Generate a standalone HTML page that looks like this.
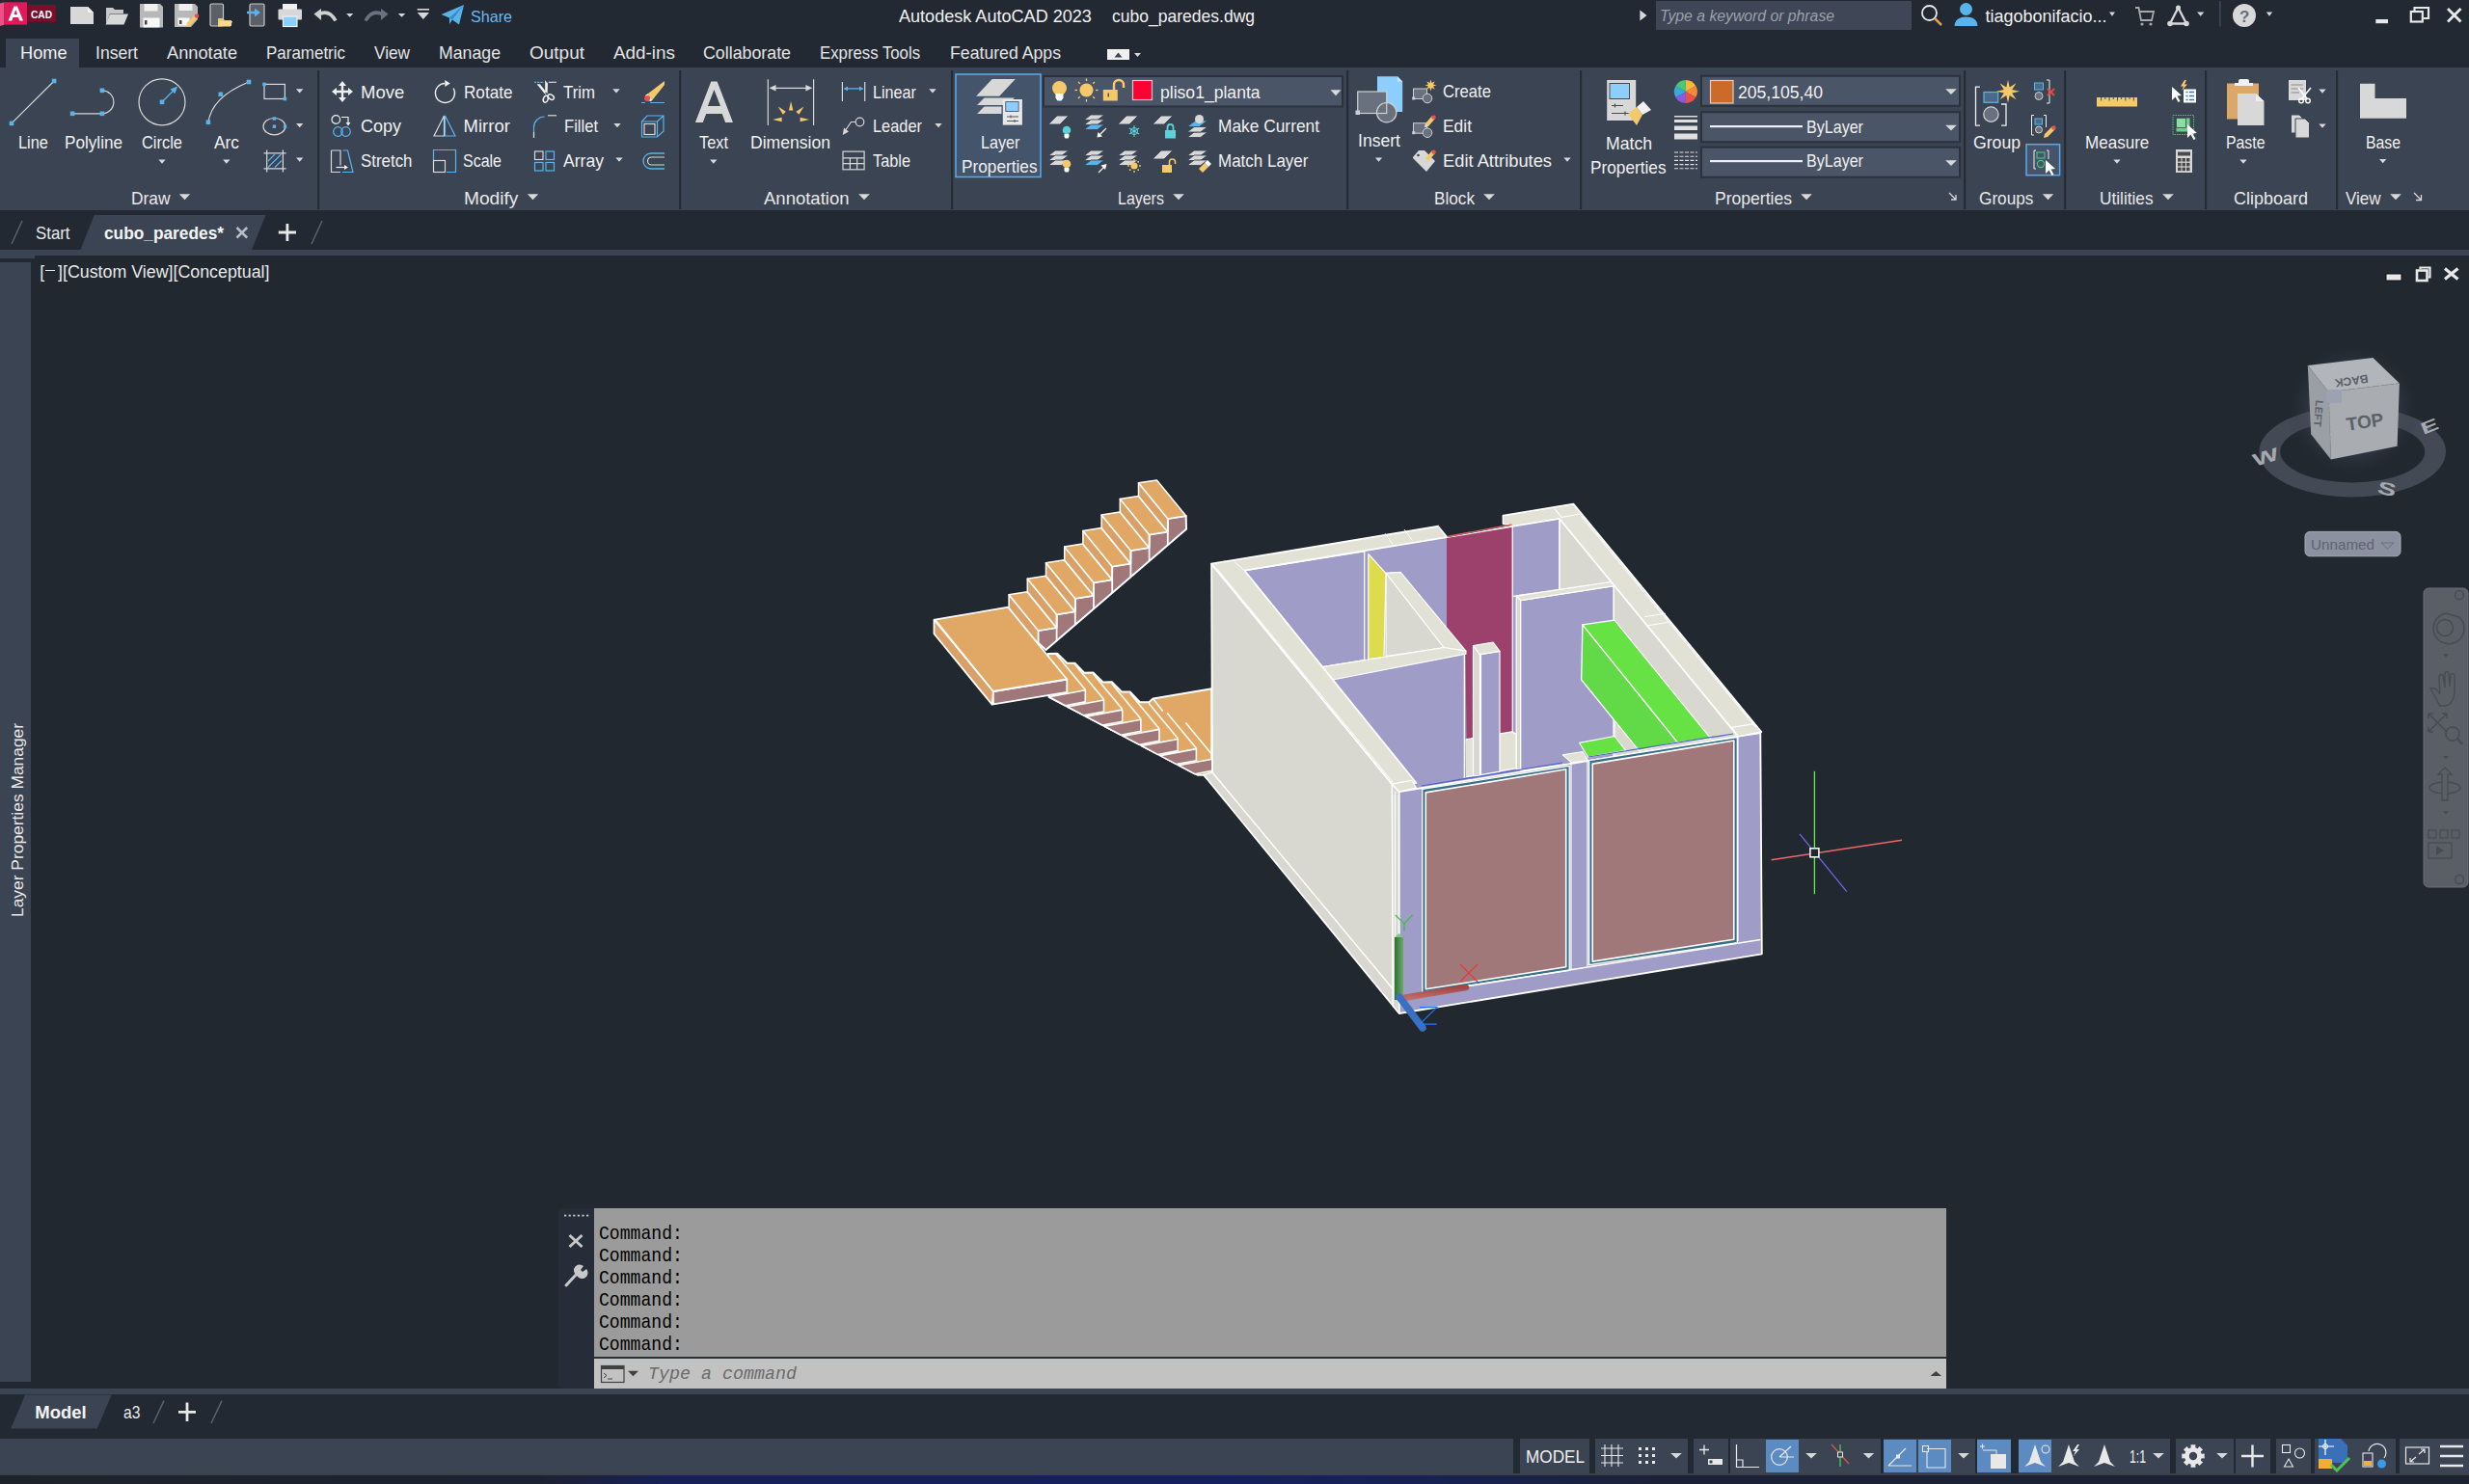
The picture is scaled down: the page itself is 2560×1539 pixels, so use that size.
<!DOCTYPE html>
<html><head><meta charset="utf-8">
<style>
*{margin:0;padding:0;box-sizing:border-box}
html,body{width:2560px;height:1539px;overflow:hidden;background:#222933;font-family:"Liberation Sans",sans-serif;color:#f0f0f0;position:relative}
.a{position:absolute}
.t{position:absolute;white-space:nowrap;line-height:1}
svg{position:absolute;overflow:visible}
</style></head><body>
<div class="a" style="left:0px;top:0px;width:2560px;height:40px;background:#222933;"></div>
<div class="a" style="left:6px;top:40px;width:76px;height:30px;background:#3b4453;"></div>
<div class="a" style="left:0px;top:70px;width:2560px;height:148px;background:#3b4453;"></div>
<div class="a" style="left:0px;top:218px;width:2560px;height:41px;background:#222933;"></div>
<div class="a" style="left:0px;top:259px;width:2560px;height:6px;background:#3b4453;"></div>
<div class="a" style="left:32px;top:265px;width:2528px;height:1175px;background:#212830;"></div>
<div class="a" style="left:0px;top:265px;width:36px;height:3px;background:#3b4453;"></div>
<div class="a" style="left:0px;top:272px;width:32px;height:1161px;background:#3b4453;"></div>
<div class="a" style="left:0px;top:1440px;width:2560px;height:6px;background:#3b4453;"></div>
<div class="a" style="left:0px;top:1446px;width:2560px;height:45px;background:#222933;"></div>
<div class="a" style="left:0px;top:1491px;width:2560px;height:37px;background:#222933;"></div>
<div class="a" style="left:0px;top:1492px;width:1569px;height:36px;background:#3b4453;"></div>
<div class="a" style="left:0px;top:1528px;width:2560px;height:11px;background:linear-gradient(90deg,#1e232b 0%,#1d2233 22%,#17205a 27%,#152060 50%,#172157 57%,#1b2238 67%,#1c2230 100%);"></div>
<div class="a" style="left:0px;top:1528px;width:2560px;height:1.5px;background:#3d424a;"></div>
<div class="t" style="left:932.0px;top:7.0px;font-size:19px;color:#f0f0f0;font-family:'Liberation Sans',sans-serif;transform:scale(0.951,1.000);transform-origin:0 16.1px;">Autodesk AutoCAD 2023</div>
<div class="t" style="left:1153.0px;top:7.0px;font-size:19px;color:#f0f0f0;font-family:'Liberation Sans',sans-serif;transform:scale(0.922,1.000);transform-origin:0 16.1px;">cubo_paredes.dwg</div>
<div class="t" style="left:488.0px;top:8.7px;font-size:16.5px;color:#6cb8f0;font-family:'Liberation Sans',sans-serif;transform:scale(0.977,1.000);transform-origin:0 14.0px;">Share</div>
<div class="a" style="left:1717px;top:1px;width:265px;height:30px;background:#3f4757;"></div>
<div class="t" style="left:1721.0px;top:8.9px;font-size:16px;color:#9aa0aa;font-family:'Liberation Sans',sans-serif;font-style:italic;transform:scale(0.985,1.000);transform-origin:0 13.6px;">Type a keyword or phrase</div>
<div class="t" style="left:2058.5px;top:7.7px;font-size:18px;color:#f0f0f0;font-family:'Liberation Sans',sans-serif;">tiagobonifacio...</div>
<div class="t" style="left:20.7px;top:46.2px;font-size:18.5px;color:#f2f2f2;font-family:'Liberation Sans',sans-serif;transform:scale(0.985,1.000);transform-origin:0 15.7px;">Home</div>
<div class="t" style="left:99.0px;top:46.2px;font-size:18.5px;color:#e4e4e4;font-family:'Liberation Sans',sans-serif;transform:scale(0.951,1.000);transform-origin:0 15.7px;">Insert</div>
<div class="t" style="left:173.0px;top:46.2px;font-size:18.5px;color:#e4e4e4;font-family:'Liberation Sans',sans-serif;transform:scale(0.986,1.000);transform-origin:0 15.7px;">Annotate</div>
<div class="t" style="left:276.0px;top:46.2px;font-size:18.5px;color:#e4e4e4;font-family:'Liberation Sans',sans-serif;transform:scale(0.917,1.000);transform-origin:0 15.7px;">Parametric</div>
<div class="t" style="left:388.0px;top:46.2px;font-size:18.5px;color:#e4e4e4;font-family:'Liberation Sans',sans-serif;transform:scale(0.930,1.000);transform-origin:0 15.7px;">View</div>
<div class="t" style="left:455.0px;top:46.2px;font-size:18.5px;color:#e4e4e4;font-family:'Liberation Sans',sans-serif;transform:scale(0.957,1.000);transform-origin:0 15.7px;">Manage</div>
<div class="t" style="left:549.0px;top:46.2px;font-size:18.5px;color:#e4e4e4;font-family:'Liberation Sans',sans-serif;transform:scale(1.026,1.000);transform-origin:0 15.7px;">Output</div>
<div class="t" style="left:636.0px;top:46.2px;font-size:18.5px;color:#e4e4e4;font-family:'Liberation Sans',sans-serif;transform:scale(1.020,1.000);transform-origin:0 15.7px;">Add-ins</div>
<div class="t" style="left:729.0px;top:46.2px;font-size:18.5px;color:#e4e4e4;font-family:'Liberation Sans',sans-serif;transform:scale(0.962,1.000);transform-origin:0 15.7px;">Collaborate</div>
<div class="t" style="left:850.0px;top:46.2px;font-size:18.5px;color:#e4e4e4;font-family:'Liberation Sans',sans-serif;transform:scale(0.906,1.000);transform-origin:0 15.7px;">Express Tools</div>
<div class="t" style="left:985.0px;top:46.2px;font-size:18.5px;color:#e4e4e4;font-family:'Liberation Sans',sans-serif;transform:scale(0.956,1.000);transform-origin:0 15.7px;">Featured Apps</div>
<svg style="left:0;top:0" width="2560" height="220"><rect x="329" y="73" width="2.2" height="144" fill="#262c36"/><rect x="704" y="73" width="2.2" height="144" fill="#262c36"/><rect x="986" y="73" width="2.2" height="144" fill="#262c36"/><rect x="1396" y="73" width="2.2" height="144" fill="#262c36"/><rect x="1638" y="73" width="2.2" height="144" fill="#262c36"/><rect x="2036" y="73" width="2.2" height="144" fill="#262c36"/><rect x="2140" y="73" width="2.2" height="144" fill="#262c36"/><rect x="2286" y="73" width="2.2" height="144" fill="#262c36"/><rect x="2422" y="73" width="2.2" height="144" fill="#262c36"/><polygon points="185.8,201.2 197.2,201.2 191.5,207.2" fill="#d8d8d8"/><polygon points="546.8,201.2 558.2,201.2 552.5,207.2" fill="#d8d8d8"/><polygon points="890.2,201.2 901.8,201.2 896.0,207.2" fill="#d8d8d8"/><polygon points="1216.2,201.2 1227.8,201.2 1222.0,207.2" fill="#d8d8d8"/><polygon points="1538.2,201.2 1549.8,201.2 1544.0,207.2" fill="#d8d8d8"/><polygon points="1867.2,201.2 1878.8,201.2 1873.0,207.2" fill="#d8d8d8"/><polygon points="2117.8,201.2 2129.2,201.2 2123.5,207.2" fill="#d8d8d8"/><polygon points="2242.2,201.2 2253.8,201.2 2248.0,207.2" fill="#d8d8d8"/><polygon points="2478.2,201.2 2489.8,201.2 2484.0,207.2" fill="#d8d8d8"/></svg>
<svg style="left:0;top:0" width="2560" height="220"><line x1="12" y1="127.9" x2="56.1" y2="84" stroke="#d8d8d8" stroke-width="1.2"/><rect x="9.7" y="125.6" width="4.6" height="4.6" fill="#5ab4ec"/><rect x="53.8" y="81.7" width="4.6" height="4.6" fill="#5ab4ec"/><path d="M75.1,117.8 H105.9 A12,12 0 0 0 105.9,93.8" stroke="#d8d8d8" stroke-width="1.2" fill="none"/><rect x="72.8" y="115.5" width="4.6" height="4.6" fill="#5ab4ec"/><rect x="103.6" y="115.5" width="4.6" height="4.6" fill="#5ab4ec"/><rect x="103.6" y="91.5" width="4.6" height="4.6" fill="#5ab4ec"/><circle cx="168" cy="105.8" r="24" stroke="#d8d8d8" stroke-width="1.2" fill="none"/><line x1="168" y1="105.8" x2="181" y2="92.8" stroke="#5ab4ec" stroke-width="1.3"/><polygon points="184.2,89.6 176.5,92.5 181.3,97.3" fill="#5ab4ec"/><rect x="165.7" y="103.5" width="4.6" height="4.6" fill="#5ab4ec"/><polygon points="164.3,165.5 171.7,165.5 168.0,169.7" fill="#d8d8d8"/><path d="M215.9,126.8 Q220,100 258,85" stroke="#d8d8d8" stroke-width="1.2" fill="none"/><rect x="213.6" y="124.5" width="4.6" height="4.6" fill="#5ab4ec"/><rect x="226.5" y="95.5" width="4.6" height="4.6" fill="#5ab4ec"/><rect x="255.7" y="82.7" width="4.6" height="4.6" fill="#5ab4ec"/><polygon points="231.1,165.5 238.5,165.5 234.8,169.7" fill="#d8d8d8"/><rect x="274" y="87.4" width="21.4" height="15.1" stroke="#d8d8d8" stroke-width="1.2" fill="none"/><rect x="272.2" y="85.6" width="3.6" height="3.6" fill="#5ab4ec"/><rect x="293.6" y="100.7" width="3.6" height="3.6" fill="#5ab4ec"/><polygon points="307.0,92.2 314.4,92.2 310.7,96.4" fill="#d8d8d8"/><ellipse cx="284.4" cy="131.2" rx="11.4" ry="8.7" stroke="#d8d8d8" stroke-width="1.2" fill="none"/><rect x="282.7" y="121.3" width="3.4" height="3.4" fill="#5ab4ec"/><rect x="282.7" y="129.5" width="3.4" height="3.4" fill="#5ab4ec"/><rect x="293.9" y="129.5" width="3.4" height="3.4" fill="#5ab4ec"/><polygon points="307.0,128.0 314.4,128.0 310.7,132.2" fill="#d8d8d8"/><path d="M276.7,155.5 V178.5 M293.4,155.5 V178.5 M273.5,158.9 H296.6 M273.5,174.9 H296.6" stroke="#d8d8d8" stroke-width="1.2"/><path d="M278,167 L285,160 M278,173.5 L291.5,160 M285,173.5 L292,166.5" stroke="#5ab4ec" stroke-width="1.2"/><polygon points="307.0,163.5 314.4,163.5 310.7,167.7" fill="#d8d8d8"/></svg>
<svg style="left:0;top:0" width="2560" height="220"><g transform="translate(343,83) scale(1.0)"><path d="M12,1 L16,6 H13.2 V10.8 H18 V8 L23,12 L18,16 V13.2 H13.2 V18 H16 L12,23 L8,18 H10.8 V13.2 H6 V16 L1,12 L6,8 V10.8 H10.8 V6 H8 Z" fill="#f0f0f0"/></g><g transform="translate(451,82.5) scale(1.0)"><path d="M10.4,4 A10,10 0 1 0 19.1,9" stroke="#f0f0f0" stroke-width="1.4" fill="none"/><polygon points="10.3,0.5 15.8,4 10.3,7.5" fill="#f0f0f0"/></g><g transform="translate(553,83) scale(1.0)"><path d="M1,2.3 H10.9" stroke="#5ab4ec" stroke-width="1.2" stroke-dasharray="2.2,1"/><path d="M15.8,2.3 H23.9" stroke="#d8d8d8" stroke-width="1.2"/><polygon points="3.6,4.3 6.9,4.3 14.2,13.4 12.4,14.9" fill="#f0f0f0"/><polygon points="12.2,0.3 15,3.5 14.6,13.7 12.2,13.7" fill="#f0f0f0"/><circle cx="13.1" cy="13.6" r="0.8" fill="#3b4453"/><ellipse cx="12.8" cy="19.7" rx="2.4" ry="3.6" transform="rotate(20 12.8 19.7)" stroke="#f0f0f0" stroke-width="1.5" fill="none"/><ellipse cx="18.2" cy="17.6" rx="2.3" ry="3.5" transform="rotate(-55 18.2 17.6)" stroke="#f0f0f0" stroke-width="1.5" fill="none"/></g><polygon points="635.3,92.2 642.7,92.2 639.0,96.4" fill="#d8d8d8"/><g transform="translate(665,83) scale(1.0)"><polygon points="24,1 24,5 12,20 8,18 7,14" fill="#f5c86a"/><polygon points="7,14 8,18 12,20 10,22 5,21 4,16" fill="#ffffff"/><circle cx="6" cy="19" r="3" fill="#e65050"/><path d="M0,23.5 H4 M9,23.5 H24" stroke="#5ab4ec" stroke-width="1.2"/></g><g transform="translate(343,119) scale(1.0)"><circle cx="5.3" cy="5" r="4.3" stroke="#f0f0f0" stroke-width="1.2" fill="none"/><path d="M11,2.5 H18 V9" stroke="#f0f0f0" stroke-width="1.2" fill="none"/><polygon points="15.5,8 20.5,8 18,11.5" fill="#f0f0f0"/><circle cx="7.5" cy="17.5" r="4.8" stroke="#5ab4ec" stroke-width="1.2" fill="none"/><circle cx="15.5" cy="17.5" r="4.8" stroke="#5ab4ec" stroke-width="1.2" fill="none"/></g><g transform="translate(449,119) scale(1.0)"><polygon points="1,22 11.5,22 11.5,1" stroke="#d8d8d8" stroke-width="1.2" fill="none"/><polygon points="12.5,1 12.5,22 23,22" stroke="#5ab4ec" stroke-width="1.2" fill="none"/></g><g transform="translate(553,119) scale(1.0)"><path d="M0.5,24 V13 A11,11 0 0 1 11.5,2" stroke="#5ab4ec" stroke-width="1.2" fill="none"/><path d="M0.5,24 V18" stroke="#d8d8d8" stroke-width="1.2"/><path d="M15,0.8 H24" stroke="#d8d8d8" stroke-width="1.2"/></g><polygon points="636.3,128.0 643.7,128.0 640.0,132.2" fill="#d8d8d8"/><g transform="translate(665,119) scale(1.0)"><path d="M0.5,7 L6,1 H23 V17 L16.5,23 H0.5 Z M0.5,7 H16.5 V23 M16.5,7 L23,1" stroke="#5ab4ec" stroke-width="1.2" fill="none"/><rect x="3" y="9.5" width="11" height="11" stroke="#d8d8d8" stroke-width="1.2" fill="none"/></g><g transform="translate(343,155) scale(1.0)"><path d="M0.5,1 H10 V16.5 M10,23.5 H0.5 V1" stroke="#d8d8d8" stroke-width="1.2" fill="none"/><path d="M12.5,1 H17.5 L23,23.5 H12" stroke="#5ab4ec" stroke-width="1.2" fill="none"/><path d="M5.5,18.5 H15" stroke="#f0f0f0" stroke-width="1.2"/><polygon points="14,16 18,18.5 14,21" fill="#f0f0f0"/></g><g transform="translate(449,155) scale(1.0)"><path d="M0.5,11 V0.5 H23.5 V23.5 H14" stroke="#5ab4ec" stroke-width="1.2" fill="none"/><rect x="0.5" y="11.5" width="12" height="12" stroke="#d8d8d8" stroke-width="1.2" fill="none"/></g><g transform="translate(554,155) scale(1.0)"><rect x="0.5" y="2" width="8.5" height="8.5" stroke="#d8d8d8" stroke-width="1.2" fill="none"/><rect x="12" y="2" width="8.5" height="8.5" stroke="#5ab4ec" stroke-width="1.2" fill="none"/><rect x="0.5" y="13.5" width="8.5" height="8.5" stroke="#5ab4ec" stroke-width="1.2" fill="none"/><rect x="12" y="13.5" width="8.5" height="8.5" stroke="#5ab4ec" stroke-width="1.2" fill="none"/></g><polygon points="638.3,163.5 645.7,163.5 642.0,167.7" fill="#d8d8d8"/><g transform="translate(665,155) scale(1.0)"><path d="M24,4 H10 A8,8 0 0 0 10,20 H24" stroke="#5ab4ec" stroke-width="1.3" fill="none"/><path d="M24,8 H10.5 A4,4 0 0 0 10.5,16 H24" stroke="#d8d8d8" stroke-width="1.2" fill="none"/></g></svg>
<svg style="left:0;top:0" width="2560" height="220"><path d="M720.9,127 L737.3,84.5 H743.6 L760,127 H752.1 L748.7,117.9 H732.2 L728.8,127 Z M733.9,110 H747 L740.4,93 Z" fill="#d8d8d8" fill-rule="evenodd"/><polygon points="736.1,165.5 743.5,165.5 739.8,169.7" fill="#d8d8d8"/><path d="M796.3,82.2 V129.9 M843.6,82.2 V129.9 M800,91.3 H840" stroke="#d8d8d8" stroke-width="1.2"/><polygon points="797.5,91.3 804.5,88 804.5,94.6" fill="#d8d8d8"/><polygon points="842.4,91.3 835.4,88 835.4,94.6" fill="#d8d8d8"/><polygon points="817.9,114.5 822.3,114.5 820.1,105.0" fill="#f5c86a"/><polygon points="811.8,118.8 814.9,115.7 806.7,110.6" fill="#f5c86a"/><polygon points="825.3,115.7 828.4,118.8 833.5,110.6" fill="#f5c86a"/><polygon points="810.6,126.2 810.6,121.8 801.1,124.0" fill="#f5c86a"/><polygon points="829.6,121.8 829.6,126.2 839.1,124.0" fill="#f5c86a"/><path d="M873.4,85 V105 M896.7,85 V105" stroke="#d8d8d8" stroke-width="1.2"/><line x1="876" y1="91.9" x2="894" y2="91.9" stroke="#5ab4ec" stroke-width="1.3"/><polygon points="874.5,91.9 879,89.5 879,94.3" fill="#5ab4ec"/><polygon points="895.6,91.9 891,89.5 891,94.3" fill="#5ab4ec"/><polygon points="963.3,92.2 970.7,92.2 967.0,96.4" fill="#d8d8d8"/><circle cx="891.5" cy="126.5" r="4.3" stroke="#d8d8d8" stroke-width="1.2" fill="none"/><path d="M887,126.5 H882.5 L876,136" stroke="#d8d8d8" stroke-width="1.2" fill="none"/><polygon points="873.8,140 875,132.5 880,136.5" fill="#d8d8d8"/><polygon points="969.3,128.0 976.7,128.0 973.0,132.2" fill="#d8d8d8"/><rect x="874" y="157.1" width="22.1" height="18.7" stroke="#d8d8d8" stroke-width="1.2" fill="none"/><path d="M874,163.9 H896 M874,169.6 H896 M881.4,163.9 V175.8 M888.7,163.9 V175.8" stroke="#d8d8d8" stroke-width="1.2"/></svg>
<svg style="left:0;top:0" width="2560" height="220"><rect x="991" y="77" width="88" height="106.5" fill="#44546a" stroke="#5aaaf0" stroke-width="1.5"/><polygon points="1012.1,99.7 1028.7,82 1052.8,82 1036.2,99.7" fill="#d8d8d8"/><polygon points="1012.1,109.5 1020.5,101 1052.8,101 1044.4,109.5" fill="#d8d8d8" stroke="#44546a" stroke-width="1"/><polygon points="1012.1,118.5 1020.5,110 1039,110 1039,118.5" fill="#d8d8d8" stroke="#44546a" stroke-width="1"/><rect x="1039.8" y="103" width="20.1" height="26.6" fill="#e8e8e8"/><rect x="1042.8" y="105.6" width="13.3" height="9.9" fill="#8ccfff" stroke="#3a4a5a" stroke-width="0.8"/><path d="M1044,121 H1056 M1044,125.5 H1056 M1048,119.5 V122.5 M1052,124 V127" stroke="#555" stroke-width="1"/><rect x="1082" y="79" width="310" height="31.5" fill="#4b5568" stroke="#2b323e" stroke-width="2"/><circle cx="1098.5" cy="91.5" r="7.5" fill="#f5c86a"/><path d="M1094.5,97 H1102.5 V101.5 L1100.5,104.5 H1096.5 L1094.5,101.5 Z" fill="#ffffff"/><circle cx="1126.5" cy="93.5" r="7" fill="#f5c86a"/><line x1="1136.0" y1="93.5" x2="1138.5" y2="93.5" stroke="#f5c86a" stroke-width="1.3"/><line x1="1133.2" y1="100.2" x2="1135.0" y2="102.0" stroke="#f5c86a" stroke-width="1.3"/><line x1="1126.5" y1="103.0" x2="1126.5" y2="105.5" stroke="#f5c86a" stroke-width="1.3"/><line x1="1119.8" y1="100.2" x2="1118.0" y2="102.0" stroke="#f5c86a" stroke-width="1.3"/><line x1="1117.0" y1="93.5" x2="1114.5" y2="93.5" stroke="#f5c86a" stroke-width="1.3"/><line x1="1119.8" y1="86.8" x2="1118.0" y2="85.0" stroke="#f5c86a" stroke-width="1.3"/><line x1="1126.5" y1="84.0" x2="1126.5" y2="81.5" stroke="#f5c86a" stroke-width="1.3"/><line x1="1133.2" y1="86.8" x2="1135.0" y2="85.0" stroke="#f5c86a" stroke-width="1.3"/><rect x="1143.8" y="93" width="15" height="11.5" fill="#f5c86a"/><path d="M1155,93 V88 A5,5 0 0 1 1165,88 V91" stroke="#f5c86a" stroke-width="2.5" fill="none"/><rect x="1148.5" y="96.5" width="1.5" height="4" fill="#4b5568"/><rect x="1174.5" y="83.5" width="20" height="20" fill="#ff0033" stroke="#d8c8c8" stroke-width="1.2"/><polygon points="1379.5,93.2 1390.5,93.2 1385.0,99.2" fill="#d8d8d8"/><polygon points="1087,129 1096.0,120 1108,120 1099.0,129" fill="#d8d8d8" stroke="#3b4453" stroke-width="0.9"/><circle cx="1106" cy="135" r="4.3" fill="#5bd2d8"/><path d="M1103.5,139 h5 v3 l-1,1.5 h-3 l-1,-1.5z" fill="#ffffff"/><polygon points="1124,124.5 1131.2,119 1145,119 1137.8,124.5" fill="#d8d8d8" stroke="#3b4453" stroke-width="0.9"/><polygon points="1124,129.5 1131.2,124 1145,124 1137.8,129.5" fill="#d8d8d8" stroke="#3b4453" stroke-width="0.9"/><polygon points="1124,134.5 1131.2,129 1145,129 1137.8,134.5" fill="#5ab4ec" stroke="#3b4453" stroke-width="0.9"/><path d="M1147,133 L1139,141" stroke="#ffffff" stroke-width="1.3"/><polygon points="1137.5,142.5 1138.5,137 1143,141.5" fill="#ffffff"/><polygon points="1159,129 1168.0,120 1180,120 1171.0,129" fill="#d8d8d8" stroke="#3b4453" stroke-width="0.9"/><g stroke="#5bd2d8" stroke-width="1.1"><line x1="1176" y1="130" x2="1176" y2="142"/><line x1="1170.8" y1="133" x2="1181.2" y2="139"/><line x1="1170.8" y1="139" x2="1181.2" y2="133"/></g><circle cx="1176" cy="136" r="3.5" stroke="#5bd2d8" stroke-width="1" fill="none"/><polygon points="1195,129 1204.0,120 1216,120 1207.0,129" fill="#d8d8d8" stroke="#3b4453" stroke-width="0.9"/><rect x="1208" y="135" width="11" height="8.5" fill="#5bd2d8"/><path d="M1210.5,135 v-3 a3,3 0 0 1 6,0 v3" stroke="#5bd2d8" stroke-width="1.8" fill="none"/><polygon points="1231,142.5 1238.2,137 1252,137 1244.8,142.5" fill="#d8d8d8" stroke="#3b4453" stroke-width="0.9"/><polygon points="1231,137.0 1238.2,131.5 1252,131.5 1244.8,137.0" fill="#d8d8d8" stroke="#3b4453" stroke-width="0.9"/><polygon points="1231,131.5 1239.5,125 1252,125 1243.5,131.5" fill="#5ab4ec" stroke="#3b4453" stroke-width="0.9"/><circle cx="1243.5" cy="123.5" r="4.5" fill="#d8d8d8"/><polygon points="1087,161.5 1094.2,156 1108,156 1100.8,161.5" fill="#d8d8d8" stroke="#3b4453" stroke-width="0.9"/><polygon points="1087,166.5 1094.2,161 1108,161 1100.8,166.5" fill="#d8d8d8" stroke="#3b4453" stroke-width="0.9"/><polygon points="1087,171.5 1094.2,166 1108,166 1100.8,171.5" fill="#d8d8d8" stroke="#3b4453" stroke-width="0.9"/><circle cx="1106" cy="170" r="4.3" fill="#f5c86a"/><path d="M1103.5,174 h5 v3 l-1,1.5 h-3 l-1,-1.5z" fill="#ffffff"/><polygon points="1124,161.5 1131.2,156 1145,156 1137.8,161.5" fill="#d8d8d8" stroke="#3b4453" stroke-width="0.9"/><polygon points="1124,166.5 1131.2,161 1145,161 1137.8,166.5" fill="#d8d8d8" stroke="#3b4453" stroke-width="0.9"/><polygon points="1124,171.5 1131.2,166 1145,166 1137.8,171.5" fill="#5ab4ec" stroke="#3b4453" stroke-width="0.9"/><path d="M1139,179 L1146,172" stroke="#ffffff" stroke-width="1.3"/><polygon points="1147.5,170 1141.5,171.5 1146,176" fill="#ffffff"/><polygon points="1159,161.5 1166.2,156 1180,156 1172.8,161.5" fill="#d8d8d8" stroke="#3b4453" stroke-width="0.9"/><polygon points="1159,166.5 1166.2,161 1180,161 1172.8,166.5" fill="#d8d8d8" stroke="#3b4453" stroke-width="0.9"/><polygon points="1159,171.5 1166.2,166 1180,166 1172.8,171.5" fill="#d8d8d8" stroke="#3b4453" stroke-width="0.9"/><circle cx="1176" cy="172" r="3.6" fill="#f5c86a"/><circle cx="1182.0" cy="172.0" r="0.9" fill="#f5c86a"/><circle cx="1180.2" cy="176.2" r="0.9" fill="#f5c86a"/><circle cx="1176.0" cy="178.0" r="0.9" fill="#f5c86a"/><circle cx="1171.8" cy="176.2" r="0.9" fill="#f5c86a"/><circle cx="1170.0" cy="172.0" r="0.9" fill="#f5c86a"/><circle cx="1171.8" cy="167.8" r="0.9" fill="#f5c86a"/><circle cx="1176.0" cy="166.0" r="0.9" fill="#f5c86a"/><circle cx="1180.2" cy="167.8" r="0.9" fill="#f5c86a"/><polygon points="1195,165 1204.0,156 1216,156 1207.0,165" fill="#d8d8d8" stroke="#3b4453" stroke-width="0.9"/><rect x="1205" y="171" width="10" height="8" fill="#f5c86a"/><path d="M1212.5,171 v-3 a3,3 0 0 1 6,0 v2" stroke="#f5c86a" stroke-width="1.6" fill="none"/><polygon points="1231,161.5 1238.2,156 1252,156 1244.8,161.5" fill="#d8d8d8" stroke="#3b4453" stroke-width="0.9"/><polygon points="1231,166.5 1238.2,161 1252,161 1244.8,166.5" fill="#d8d8d8" stroke="#3b4453" stroke-width="0.9"/><polygon points="1231,171.5 1238.2,166 1252,166 1244.8,171.5" fill="#d8d8d8" stroke="#3b4453" stroke-width="0.9"/><polygon points="1243,175 1249,169 1253,173 1247,179" fill="#f5c86a"/><polygon points="1249,169 1252,166 1256,170 1253,173" fill="#ffffff"/></svg>
<svg style="left:0;top:0" width="2560" height="220"><path d="M1428,79.2 H1449 L1454.2,84.5 V116 H1428 Z" fill="#8ccfff"/><path d="M1449,79.2 V84.5 H1454.2" fill="#c8e8ff"/><rect x="1407.7" y="95" width="30" height="22.5" fill="#6a717e"/><circle cx="1437.7" cy="116.7" r="10.2" fill="#6a717e"/><rect x="1407.7" y="95" width="30" height="22.5" fill="none" stroke="#d0d0d0" stroke-width="1.2"/><circle cx="1437.7" cy="116.7" r="10.2" fill="none" stroke="#d0d0d0" stroke-width="1.2"/><rect x="1405.5" y="114.5" width="4.5" height="4.5" fill="#d0d0d0"/><polygon points="1425.8,163.5 1433.2,163.5 1429.5,167.7" fill="#d8d8d8"/><rect x="1465.5" y="92" width="14" height="10.5" fill="#6a717e" stroke="#d0d0d0" stroke-width="1"/><circle cx="1480" cy="102" r="4.8" fill="#6a717e" stroke="#d0d0d0" stroke-width="1"/><rect x="1464.2" y="100.5" width="3" height="3" fill="#d0d0d0"/><polygon points="1489.5,88.5 1486.1,89.6 1487.7,92.7 1484.6,91.1 1483.5,94.5 1482.4,91.1 1479.3,92.7 1480.9,89.6 1477.5,88.5 1480.9,87.4 1479.3,84.3 1482.4,85.9 1483.5,82.5 1484.6,85.9 1487.7,84.3 1486.1,87.4" fill="#f5c86a"/><rect x="1465.5" y="127.7" width="14" height="10.5" fill="#6a717e" stroke="#d0d0d0" stroke-width="1"/><circle cx="1480" cy="137.7" r="4.8" fill="#6a717e" stroke="#d0d0d0" stroke-width="1"/><rect x="1464.2" y="136.2" width="3" height="3" fill="#d0d0d0"/><polygon points="1477,132 1478,128 1485,120 1488,123 1481,131" fill="#f5c86a"/><circle cx="1486.6" cy="121.6" r="2.2" fill="#e65050"/><polygon points="1477,132 1478,128 1481,131" fill="#d8d8d8"/><polygon points="1465,163 1471,156 1477,156 1488,167 1479,178 1465,164" fill="#d8d8d8"/><circle cx="1470.5" cy="161" r="1.3" fill="#3b4453"/><polygon points="1477,168 1478,164 1485,156 1488,159 1481,167" fill="#f5c86a"/><circle cx="1486.6" cy="157.6" r="2.2" fill="#e65050"/><polygon points="1477,168 1478,164 1481,167" fill="#d8d8d8"/><polygon points="1621.3,163.5 1628.7,163.5 1625.0,167.7" fill="#d8d8d8"/></svg>
<svg style="left:0;top:0" width="2560" height="220"><rect x="1666.2" y="83" width="30" height="42" fill="#d8d8d8"/><rect x="1669" y="86.5" width="20.5" height="16" fill="#8ccfff" stroke="#4a4a4a" stroke-width="1"/><path d="M1671,109.5 H1683 M1671,117.5 H1689 M1674.5,107.5 V111.5 M1685,115.5 V119.5" stroke="#4a4a4a" stroke-width="1.2"/><polygon points="1688,118 1697,111 1703,119 1697,130 " fill="#f5c86a"/><polygon points="1697,111 1704,105 1712,114 1703,119" fill="#f0f0f0"/><path d="M1747.9,95 L1747.90,83.00 A12,12 0 0 1 1758.29,89.00 Z" fill="#f9b73a"/><path d="M1747.9,95 L1758.29,89.00 A12,12 0 0 1 1758.29,101.00 Z" fill="#f58a3a"/><path d="M1747.9,95 L1758.29,101.00 A12,12 0 0 1 1747.90,107.00 Z" fill="#e8504a"/><path d="M1747.9,95 L1747.90,107.00 A12,12 0 0 1 1737.51,101.00 Z" fill="#8a5ad8"/><path d="M1747.9,95 L1737.51,101.00 A12,12 0 0 1 1737.51,89.00 Z" fill="#3aa8d8"/><path d="M1747.9,95 L1737.51,89.00 A12,12 0 0 1 1747.90,83.00 Z" fill="#4ac878"/><rect x="1736" y="120" width="24" height="1.5" fill="#e0e0e0"/><rect x="1736" y="124" width="24" height="3" fill="#e0e0e0"/><rect x="1736" y="130.5" width="24" height="4.5" fill="#e0e0e0"/><rect x="1736" y="138.5" width="24" height="6" fill="#e0e0e0"/><path d="M1736,158 H1760 M1736,162.2 H1760 M1736,166.4 H1760 M1736,170.6 H1760 M1736,174.8 H1760" stroke="#e0e0e0" stroke-width="1.1" stroke-dasharray="4,1.5"/><rect x="1764" y="78.8" width="268" height="31" fill="#4b5568" stroke="#2b323e" stroke-width="2"/><polygon points="2017.2,92.3 2028.8,92.3 2023.0,98.0" fill="#d8d8d8"/><rect x="1764" y="116.2" width="268" height="31" fill="#4b5568" stroke="#2b323e" stroke-width="2"/><polygon points="2017.2,129.7 2028.8,129.7 2023.0,135.4" fill="#d8d8d8"/><rect x="1764" y="152.7" width="268" height="31" fill="#4b5568" stroke="#2b323e" stroke-width="2"/><polygon points="2017.2,166.2 2028.8,166.2 2023.0,171.9" fill="#d8d8d8"/><rect x="1773.5" y="83.5" width="23.5" height="23.5" fill="#cc6a2a" stroke="#e0d0c0" stroke-width="1.2"/><rect x="1773" y="130" width="96" height="2.2" fill="#f0f0f0"/><rect x="1773" y="166" width="96" height="2.2" fill="#f0f0f0"/><path d="M2021,200 L2028,207 M2028,202 V207 H2023" stroke="#d8d8d8" stroke-width="1.3" fill="none"/></svg>
<svg style="left:0;top:0" width="2560" height="220"><path d="M2053,90.2 H2048.5 V130.2 H2053 M2075,108 H2080 V130.2 H2075" stroke="#f0f0f0" stroke-width="1.3" fill="none"/><rect x="2057" y="95.5" width="14.7" height="10.8" fill="#4a6a8a" stroke="#5ab4ec" stroke-width="1.2"/><circle cx="2064.4" cy="118.6" r="7.7" fill="#6a717e" stroke="#d0d0d0" stroke-width="1.2"/><polygon points="2094.0,94.8 2086.2,96.5 2090.5,103.3 2083.7,99.0 2082.0,106.8 2080.3,99.0 2073.5,103.3 2077.8,96.5 2070.0,94.8 2077.8,93.1 2073.5,86.3 2080.3,90.6 2082.0,82.8 2083.7,90.6 2090.5,86.3 2086.2,93.1" fill="#f5c86a"/><rect x="2109.5" y="86" width="9" height="7" fill="#4a6a8a" stroke="#5ab4ec" stroke-width="1"/><circle cx="2114" cy="99.5" r="4" fill="#6a717e" stroke="#d0d0d0" stroke-width="1"/><path d="M2122,83 H2125 V107 H2122" stroke="#f0f0f0" stroke-width="1" fill="none"/><path d="M2123,92 L2130,99 M2130,92 L2123,99" stroke="#e84848" stroke-width="2"/><path d="M2109,119.5 H2106.5 V140 H2109 M2119,119.5 H2121.5 V132" stroke="#f0f0f0" stroke-width="1" fill="none"/><rect x="2110" y="123" width="7.5" height="6" fill="#4a6a8a" stroke="#5ab4ec" stroke-width="1"/><circle cx="2114" cy="134.5" r="3.5" fill="#6a717e" stroke="#d0d0d0" stroke-width="1"/><polygon points="2119,143 2120,139 2128,131 2131,134 2123,142" fill="#f5c86a"/><circle cx="2129.5" cy="132.5" r="2.2" fill="#e65050"/><rect x="2101" y="149.7" width="34.6" height="32" fill="#45546a" stroke="#5aaaf0" stroke-width="1.5"/><path d="M2111,156 H2109 V175 H2111 M2122,156 H2124 V165" stroke="#f0f0f0" stroke-width="1" fill="none"/><rect x="2112" y="158" width="8" height="6" fill="none" stroke="#4ac878" stroke-width="1.1"/><circle cx="2116" cy="170" r="3.6" fill="none" stroke="#4ac878" stroke-width="1.1"/><polygon points="2121,166 2121,180 2124.5,176.5 2127.5,182 2129.5,181 2126.5,175.5 2131,175" fill="#ffffff"/></svg>
<svg style="left:0;top:0" width="2560" height="220"><rect x="2174" y="101" width="42" height="9.5" fill="#f5c86a"/><rect x="2178.2" y="101" width="0.9" height="3.5" fill="#3b4453"/><rect x="2182.4" y="101" width="0.9" height="2" fill="#3b4453"/><rect x="2186.6" y="101" width="0.9" height="3.5" fill="#3b4453"/><rect x="2190.8" y="101" width="0.9" height="2" fill="#3b4453"/><rect x="2195.0" y="101" width="0.9" height="3.5" fill="#3b4453"/><rect x="2199.2" y="101" width="0.9" height="2" fill="#3b4453"/><rect x="2203.4" y="101" width="0.9" height="3.5" fill="#3b4453"/><rect x="2207.6" y="101" width="0.9" height="2" fill="#3b4453"/><rect x="2211.8" y="101" width="0.9" height="3.5" fill="#3b4453"/><polygon points="2191.3,165.5 2198.7,165.5 2195.0,169.7" fill="#d8d8d8"/><polygon points="2252,90 2252,104 2255.5,100.5 2258.5,106 2260.5,105 2257.5,99.5 2262,99" fill="#ffffff"/><rect x="2264" y="92.5" width="13" height="14" fill="#ffffff"/><path d="M2266.5,95.5 h2 M2270,95.5 h5 M2266.5,99.5 h2 M2270,99.5 h5 M2266.5,103.5 h2 M2270,103.5 h5" stroke="#2a7ad8" stroke-width="1.3"/><polygon points="2265,83 2261,89.5 2264,89.5 2262,94 2268,87.5 2265,87.5 2267,83" fill="#f5c86a"/><rect x="2253" y="119.5" width="21.5" height="20" fill="none" stroke="#4ac878" stroke-width="1" stroke-dasharray="1.5,1"/><rect x="2256.5" y="122.5" width="14" height="14" fill="#6bd08a"/><rect x="2256.5" y="122.5" width="10" height="10" fill="#88e0a0" stroke="#3b4453" stroke-width="0.8"/><polygon points="2268,129 2268,143 2271.5,139.5 2274.5,145 2276.5,144 2273.5,138.5 2278,138" fill="#ffffff"/><rect x="2256" y="155" width="17" height="24" fill="#d8d8d8"/><rect x="2258" y="157.5" width="13" height="4" fill="#4a4a4a"/><rect x="2258.0" y="164.0" width="3.5" height="3.6" fill="#4a4a4a"/><rect x="2262.5" y="164.0" width="3.5" height="3.6" fill="#4a4a4a"/><rect x="2267.0" y="164.0" width="3.5" height="3.6" fill="#4a4a4a"/><rect x="2258.0" y="168.8" width="3.5" height="3.6" fill="#4a4a4a"/><rect x="2262.5" y="168.8" width="3.5" height="3.6" fill="#4a4a4a"/><rect x="2267.0" y="168.8" width="3.5" height="3.6" fill="#4a4a4a"/><rect x="2258.0" y="173.6" width="3.5" height="3.6" fill="#4a4a4a"/><rect x="2262.5" y="173.6" width="3.5" height="3.6" fill="#4a4a4a"/><rect x="2267.0" y="173.6" width="3.5" height="3.6" fill="#4a4a4a"/></svg>
<svg style="left:0;top:0" width="2560" height="220"><rect x="2309" y="86.5" width="33" height="37" fill="#dba86a"/><rect x="2321" y="82" width="11" height="6" rx="2" fill="#f0f0f0"/><rect x="2317" y="86" width="19" height="3" fill="#f0f0f0"/><path d="M2320,97 H2339 L2347.5,105 V130 H2320 Z" fill="#d8d8d8"/><path d="M2339,97 V105 H2347.5" fill="#f0f0f0"/><polygon points="2322.3,165.5 2329.7,165.5 2326.0,169.7" fill="#d8d8d8"/><rect x="2373" y="83" width="18" height="21" fill="#d8d8d8"/><path d="M2375.5,88 H2388 M2375.5,92 H2388 M2375.5,96 H2384" stroke="#8a8a8a" stroke-width="1"/><path d="M2383,91 L2392,102 M2396,91 L2387,102" stroke="#ffffff" stroke-width="1.6"/><circle cx="2386" cy="104.5" r="2.3" fill="none" stroke="#ffffff" stroke-width="1.4"/><circle cx="2393" cy="104.5" r="2.3" fill="none" stroke="#ffffff" stroke-width="1.4"/><polygon points="2404.3,92.5 2411.7,92.5 2408.0,96.7" fill="#d8d8d8"/><path d="M2375.5,119 H2384 L2387,122 V138 H2375.5 Z" fill="#d8d8d8" stroke="#3b4453" stroke-width="1"/><path d="M2380,123 H2390 L2394.5,127.5 V143 H2380 Z" fill="#d8d8d8" stroke="#3b4453" stroke-width="1"/><polygon points="2404.3,128.5 2411.7,128.5 2408.0,132.7" fill="#d8d8d8"/><path d="M2447,86.8 H2462.5 V102 H2495 V122.8 H2447 Z" fill="#d8d8d8"/><polygon points="2467.0,165.0 2474.4,165.0 2470.7,169.2" fill="#d8d8d8"/><path d="M2503,200 L2510.5,207.5 M2510.5,202 V207.5 H2505" stroke="#d8d8d8" stroke-width="1.3" fill="none"/></svg>
<div class="t" style="left:135.5px;top:197.3px;font-size:18.5px;color:#e8e8e8;font-family:'Liberation Sans',sans-serif;transform:scale(0.938,1.000);transform-origin:0 15.7px;">Draw</div>
<div class="t" style="left:480.6px;top:197.3px;font-size:18.5px;color:#e8e8e8;font-family:'Liberation Sans',sans-serif;transform:scale(1.035,1.000);transform-origin:0 15.7px;">Modify</div>
<div class="t" style="left:792.0px;top:197.3px;font-size:18.5px;color:#e8e8e8;font-family:'Liberation Sans',sans-serif;">Annotation</div>
<div class="t" style="left:1158.6px;top:197.3px;font-size:18.5px;color:#e8e8e8;font-family:'Liberation Sans',sans-serif;transform:scale(0.863,1.000);transform-origin:0 15.7px;">Layers</div>
<div class="t" style="left:1487.0px;top:197.3px;font-size:18.5px;color:#e8e8e8;font-family:'Liberation Sans',sans-serif;transform:scale(0.928,1.000);transform-origin:0 15.7px;">Block</div>
<div class="t" style="left:1778.0px;top:197.3px;font-size:18.5px;color:#e8e8e8;font-family:'Liberation Sans',sans-serif;transform:scale(0.949,1.000);transform-origin:0 15.7px;">Properties</div>
<div class="t" style="left:2051.6px;top:197.3px;font-size:18.5px;color:#e8e8e8;font-family:'Liberation Sans',sans-serif;transform:scale(0.930,1.000);transform-origin:0 15.7px;">Groups</div>
<div class="t" style="left:2176.5px;top:197.3px;font-size:18.5px;color:#e8e8e8;font-family:'Liberation Sans',sans-serif;transform:scale(0.931,1.000);transform-origin:0 15.7px;">Utilities</div>
<div class="t" style="left:2316.0px;top:197.3px;font-size:18.5px;color:#e8e8e8;font-family:'Liberation Sans',sans-serif;transform:scale(0.972,1.000);transform-origin:0 15.7px;">Clipboard</div>
<div class="t" style="left:2432.0px;top:197.3px;font-size:18.5px;color:#e8e8e8;font-family:'Liberation Sans',sans-serif;transform:scale(0.920,1.000);transform-origin:0 15.7px;">View</div>
<div class="t" style="left:19.0px;top:139.3px;font-size:18.5px;color:#f0f0f0;font-family:'Liberation Sans',sans-serif;transform:scale(0.886,1.000);transform-origin:0 15.7px;">Line</div>
<div class="t" style="left:67.0px;top:139.3px;font-size:18.5px;color:#f0f0f0;font-family:'Liberation Sans',sans-serif;transform:scale(0.926,1.000);transform-origin:0 15.7px;">Polyline</div>
<div class="t" style="left:147.0px;top:139.3px;font-size:18.5px;color:#f0f0f0;font-family:'Liberation Sans',sans-serif;transform:scale(0.888,1.000);transform-origin:0 15.7px;">Circle</div>
<div class="t" style="left:222.0px;top:139.3px;font-size:18.5px;color:#f0f0f0;font-family:'Liberation Sans',sans-serif;transform:scale(0.937,1.000);transform-origin:0 15.7px;">Arc</div>
<div class="t" style="left:725.0px;top:139.3px;font-size:18.5px;color:#f0f0f0;font-family:'Liberation Sans',sans-serif;transform:scale(0.884,1.000);transform-origin:0 15.7px;">Text</div>
<div class="t" style="left:778.0px;top:139.3px;font-size:18.5px;color:#f0f0f0;font-family:'Liberation Sans',sans-serif;transform:scale(0.950,1.000);transform-origin:0 15.7px;">Dimension</div>
<div class="t" style="left:1016.5px;top:139.3px;font-size:18.5px;color:#f0f0f0;font-family:'Liberation Sans',sans-serif;transform:scale(0.875,1.000);transform-origin:0 15.7px;">Layer</div>
<div class="t" style="left:1408.0px;top:137.3px;font-size:18.5px;color:#f0f0f0;font-family:'Liberation Sans',sans-serif;transform:scale(0.951,1.000);transform-origin:0 15.7px;">Insert</div>
<div class="t" style="left:1665.0px;top:140.3px;font-size:18.5px;color:#f0f0f0;font-family:'Liberation Sans',sans-serif;transform:scale(0.953,1.000);transform-origin:0 15.7px;">Match</div>
<div class="t" style="left:2046.0px;top:139.3px;font-size:18.5px;color:#f0f0f0;font-family:'Liberation Sans',sans-serif;transform:scale(0.953,1.000);transform-origin:0 15.7px;">Group</div>
<div class="t" style="left:2161.7px;top:139.3px;font-size:18.5px;color:#f0f0f0;font-family:'Liberation Sans',sans-serif;transform:scale(0.921,1.000);transform-origin:0 15.7px;">Measure</div>
<div class="t" style="left:2307.5px;top:139.3px;font-size:18.5px;color:#f0f0f0;font-family:'Liberation Sans',sans-serif;transform:scale(0.856,1.000);transform-origin:0 15.7px;">Paste</div>
<div class="t" style="left:2453.0px;top:139.3px;font-size:18.5px;color:#f0f0f0;font-family:'Liberation Sans',sans-serif;transform:scale(0.854,1.000);transform-origin:0 15.7px;">Base</div>
<div class="t" style="left:997.0px;top:164.3px;font-size:18.5px;color:#f0f0f0;font-family:'Liberation Sans',sans-serif;transform:scale(0.931,1.000);transform-origin:0 15.7px;">Properties</div>
<div class="t" style="left:1648.5px;top:164.9px;font-size:18.5px;color:#f0f0f0;font-family:'Liberation Sans',sans-serif;transform:scale(0.931,1.000);transform-origin:0 15.7px;">Properties</div>
<div class="t" style="left:374.0px;top:87.3px;font-size:18.5px;color:#f0f0f0;font-family:'Liberation Sans',sans-serif;">Move</div>
<div class="t" style="left:480.6px;top:87.3px;font-size:18.5px;color:#f0f0f0;font-family:'Liberation Sans',sans-serif;transform:scale(0.925,1.000);transform-origin:0 15.7px;">Rotate</div>
<div class="t" style="left:584.0px;top:87.3px;font-size:18.5px;color:#f0f0f0;font-family:'Liberation Sans',sans-serif;transform:scale(0.909,1.000);transform-origin:0 15.7px;">Trim</div>
<div class="t" style="left:374.0px;top:122.3px;font-size:18.5px;color:#f0f0f0;font-family:'Liberation Sans',sans-serif;transform:scale(0.972,1.000);transform-origin:0 15.7px;">Copy</div>
<div class="t" style="left:480.6px;top:122.3px;font-size:18.5px;color:#f0f0f0;font-family:'Liberation Sans',sans-serif;">Mirror</div>
<div class="t" style="left:585.0px;top:122.3px;font-size:18.5px;color:#f0f0f0;font-family:'Liberation Sans',sans-serif;transform:scale(0.896,1.000);transform-origin:0 15.7px;">Fillet</div>
<div class="t" style="left:374.0px;top:158.3px;font-size:18.5px;color:#f0f0f0;font-family:'Liberation Sans',sans-serif;transform:scale(0.913,1.000);transform-origin:0 15.7px;">Stretch</div>
<div class="t" style="left:480.0px;top:158.3px;font-size:18.5px;color:#f0f0f0;font-family:'Liberation Sans',sans-serif;transform:scale(0.864,1.000);transform-origin:0 15.7px;">Scale</div>
<div class="t" style="left:584.0px;top:158.3px;font-size:18.5px;color:#f0f0f0;font-family:'Liberation Sans',sans-serif;transform:scale(0.950,1.000);transform-origin:0 15.7px;">Array</div>
<div class="t" style="left:905.0px;top:87.3px;font-size:18.5px;color:#f0f0f0;font-family:'Liberation Sans',sans-serif;transform:scale(0.875,1.000);transform-origin:0 15.7px;">Linear</div>
<div class="t" style="left:905.0px;top:122.3px;font-size:18.5px;color:#f0f0f0;font-family:'Liberation Sans',sans-serif;transform:scale(0.885,1.000);transform-origin:0 15.7px;">Leader</div>
<div class="t" style="left:905.0px;top:158.3px;font-size:18.5px;color:#f0f0f0;font-family:'Liberation Sans',sans-serif;transform:scale(0.882,1.000);transform-origin:0 15.7px;">Table</div>
<div class="t" style="left:1262.6px;top:122.3px;font-size:18.5px;color:#f0f0f0;font-family:'Liberation Sans',sans-serif;transform:scale(0.937,1.000);transform-origin:0 15.7px;">Make Current</div>
<div class="t" style="left:1262.6px;top:158.3px;font-size:18.5px;color:#f0f0f0;font-family:'Liberation Sans',sans-serif;transform:scale(0.918,1.000);transform-origin:0 15.7px;">Match Layer</div>
<div class="t" style="left:1496.0px;top:86.3px;font-size:18.5px;color:#f0f0f0;font-family:'Liberation Sans',sans-serif;transform:scale(0.900,1.000);transform-origin:0 15.7px;">Create</div>
<div class="t" style="left:1496.0px;top:122.3px;font-size:18.5px;color:#f0f0f0;font-family:'Liberation Sans',sans-serif;transform:scale(0.941,1.000);transform-origin:0 15.7px;">Edit</div>
<div class="t" style="left:1496.0px;top:158.3px;font-size:18.5px;color:#f0f0f0;font-family:'Liberation Sans',sans-serif;transform:scale(0.990,1.000);transform-origin:0 15.7px;">Edit Attributes</div>
<div class="t" style="left:1203.0px;top:86.8px;font-size:18.5px;color:#f0f0f0;font-family:'Liberation Sans',sans-serif;transform:scale(0.950,1.000);transform-origin:0 15.7px;">pliso1_planta</div>
<div class="t" style="left:1802.0px;top:86.8px;font-size:18.5px;color:#f0f0f0;font-family:'Liberation Sans',sans-serif;transform:scale(0.950,1.000);transform-origin:0 15.7px;">205,105,40</div>
<div class="t" style="left:1872.5px;top:122.8px;font-size:18.5px;color:#f0f0f0;font-family:'Liberation Sans',sans-serif;transform:scale(0.869,1.000);transform-origin:0 15.7px;">ByLayer</div>
<div class="t" style="left:1872.5px;top:158.3px;font-size:18.5px;color:#f0f0f0;font-family:'Liberation Sans',sans-serif;transform:scale(0.869,1.000);transform-origin:0 15.7px;">ByLayer</div>
<svg style="left:0;top:218px" width="400" height="41"><polygon points="83.5,41 97.7,5 275.5,5 261,41" fill="#3b4453"/><line x1="12" y1="35" x2="23" y2="11" stroke="#5a6270" stroke-width="1.5"/><line x1="323" y1="35" x2="334" y2="11" stroke="#5a6270" stroke-width="1.5"/></svg>
<div class="t" style="left:36.5px;top:232.6px;font-size:18.5px;color:#e8e8e8;font-family:'Liberation Sans',sans-serif;transform:scale(0.909,1.000);transform-origin:0 15.7px;">Start</div>
<div class="t" style="left:108.0px;top:232.6px;font-size:18.5px;color:#f4f4f4;font-family:'Liberation Sans',sans-serif;font-weight:bold;transform:scale(0.935,1.000);transform-origin:0 15.7px;">cubo_paredes*</div>
<div class="t" style="left:41.3px;top:274.1px;font-size:17.5px;color:#e8e8e8;font-family:'Liberation Sans',sans-serif;">[</div>
<div class="t" style="left:60.4px;top:274.1px;font-size:17.5px;color:#e8e8e8;font-family:'Liberation Sans',sans-serif;transform:scale(1.018,1.000);transform-origin:0 14.9px;">][Custom View][Conceptual]</div>
<div class="a" style="left:46.8px;top:279.8px;width:10.3px;height:1.6px;background:#e8e8e8;"></div>
<div class="t" style="left:10px;top:951px;font-size:17px;color:#e8e8e8;transform:rotate(-90deg) scaleX(1.023);transform-origin:0 0;">Layer Properties Manager</div>
<svg style="left:0;top:1446px" width="300" height="45"><polygon points="11.3,35.6 26,0.4 115.7,0.4 100.7,35.6" fill="#3b4453"/><line x1="159" y1="30" x2="170" y2="6.6" stroke="#5a6270" stroke-width="1.5"/><line x1="219" y1="30" x2="230" y2="6.6" stroke="#5a6270" stroke-width="1.5"/></svg>
<svg style="left:0;top:0" width="300" height="1539"><path d="M185,1464.3 H203 M194,1454.6 V1474" stroke="#e8e8e8" stroke-width="2.8"/></svg><div class="t" style="left:36.3px;top:1456.3px;font-size:18.5px;color:#f4f4f4;font-family:'Liberation Sans',sans-serif;font-weight:bold;">Model</div>
<div class="t" style="left:127.6px;top:1456.3px;font-size:18.5px;color:#e8e8e8;font-family:'Liberation Sans',sans-serif;transform:scale(0.846,1.000);transform-origin:0 15.7px;">a3</div>
<svg style="left:0;top:0" width="2560" height="1539"><polygon points="1086.5,678.1 1096.2,677.8 1106.4,687.8 1114.5,687.8 1124.2,697.8 1133.4,697.5 1143.6,707.5 1152.8,707.2 1163.0,717.4 1171.6,717.4 1181.9,728.2 1191.1,728.2 1195.9,724.4 1256.3,714.2 1256.3,812.3 1248.2,803.7 1241.7,803.7 1087.5,722.8" fill="#e0a864" stroke="#ffffff" stroke-width="2" stroke-linejoin="round"/><polygon points="1087.7,722.8 1125.3,715.8 1125.3,727.9 1104.6,731.8" fill="#a0787a" stroke="#ffffff" stroke-width="1.6" stroke-linejoin="round"/><polyline points="1125.3,715.2 1095.1,678.6" fill="none" stroke="#ffffff" stroke-width="1.6" stroke-linejoin="round"/><polygon points="1106.8,733.0 1144.5,726.0 1144.5,738.0 1123.8,741.9" fill="#a0787a" stroke="#ffffff" stroke-width="1.6" stroke-linejoin="round"/><polyline points="1144.5,725.3 1114.3,688.8" fill="none" stroke="#ffffff" stroke-width="1.6" stroke-linejoin="round"/><polygon points="1126.0,743.1 1163.7,736.1 1163.7,748.2 1143.0,752.0" fill="#a0787a" stroke="#ffffff" stroke-width="1.6" stroke-linejoin="round"/><polyline points="1163.7,735.4 1133.5,698.9" fill="none" stroke="#ffffff" stroke-width="1.6" stroke-linejoin="round"/><polygon points="1145.2,753.2 1182.9,746.2 1182.9,758.3 1162.2,762.2" fill="#a0787a" stroke="#ffffff" stroke-width="1.6" stroke-linejoin="round"/><polyline points="1182.9,745.6 1152.7,709.0" fill="none" stroke="#ffffff" stroke-width="1.6" stroke-linejoin="round"/><polygon points="1164.4,763.4 1202.0,756.4 1202.0,768.4 1181.3,772.3" fill="#a0787a" stroke="#ffffff" stroke-width="1.6" stroke-linejoin="round"/><polyline points="1202.0,755.7 1171.9,719.2" fill="none" stroke="#ffffff" stroke-width="1.6" stroke-linejoin="round"/><polygon points="1183.6,773.5 1221.2,766.5 1221.2,778.6 1200.5,782.5" fill="#a0787a" stroke="#ffffff" stroke-width="1.6" stroke-linejoin="round"/><polyline points="1221.2,765.8 1191.1,729.3" fill="none" stroke="#ffffff" stroke-width="1.6" stroke-linejoin="round"/><polygon points="1202.8,783.6 1240.4,776.6 1240.4,788.7 1219.7,792.6" fill="#a0787a" stroke="#ffffff" stroke-width="1.6" stroke-linejoin="round"/><polyline points="1240.4,776.0 1210.2,739.4" fill="none" stroke="#ffffff" stroke-width="1.6" stroke-linejoin="round"/><polygon points="1222.0,793.8 1259.6,786.8 1259.6,798.8 1238.9,802.7" fill="#a0787a" stroke="#ffffff" stroke-width="1.6" stroke-linejoin="round"/><polyline points="1259.6,786.1 1229.4,749.6" fill="none" stroke="#ffffff" stroke-width="1.6" stroke-linejoin="round"/><polyline points="1195.9,725.0 1205.6,737.4" fill="none" stroke="#ffffff" stroke-width="1.6" stroke-linejoin="round"/><polygon points="968.5,642.6 968.5,657.2 1028.7,730.8 1029.9,717.0" fill="#d9a068" stroke="#ffffff" stroke-width="1.8" stroke-linejoin="round"/><polygon points="1029.9,717.0 1106.3,704.5 1106.3,717.8 1029.9,730.3" fill="#a0787a" stroke="#ffffff" stroke-width="1.8" stroke-linejoin="round"/><polygon points="969.3,642.6 1045.3,629.7 1106.3,704.5 1029.9,717.0" fill="#e0a864" stroke="#ffffff" stroke-width="1.8" stroke-linejoin="round"/><polygon points="1076.4,653.9 1095.3,650.9 1095.6,637.3 1114.5,634.3 1114.8,620.7 1133.7,617.8 1134.0,604.2 1152.9,601.2 1153.2,587.6 1172.1,584.6 1172.4,571.0 1191.3,568.1 1191.6,554.5 1210.5,551.5 1210.8,537.9 1229.7,534.9 1230.0,548.7 1084.5,674.1 1076.4,666.7" fill="#a0787a" stroke="#ffffff" stroke-width="2" stroke-linejoin="round"/><polygon points="1076.4,653.9 1046.1,616.8 1046.1,630.4 1076.4,667.5" fill="#d9a068" stroke="#ffffff" stroke-width="1.5" stroke-linejoin="round"/><polygon points="1076.4,653.9 1095.3,650.9 1064.9,613.8 1046.1,616.8" fill="#e0a864" stroke="#ffffff" stroke-width="1.5" stroke-linejoin="round"/><polygon points="1095.6,637.3 1065.3,600.2 1065.3,613.8 1095.6,650.9" fill="#d9a068" stroke="#ffffff" stroke-width="1.5" stroke-linejoin="round"/><polygon points="1095.6,637.3 1114.5,634.3 1084.1,597.3 1065.3,600.2" fill="#e0a864" stroke="#ffffff" stroke-width="1.5" stroke-linejoin="round"/><polygon points="1114.8,620.7 1084.5,583.7 1084.5,597.3 1114.8,634.3" fill="#d9a068" stroke="#ffffff" stroke-width="1.5" stroke-linejoin="round"/><polygon points="1114.8,620.7 1133.7,617.8 1103.3,580.7 1084.5,583.7" fill="#e0a864" stroke="#ffffff" stroke-width="1.5" stroke-linejoin="round"/><polygon points="1134.0,604.2 1103.7,567.1 1103.7,580.7 1134.0,617.8" fill="#d9a068" stroke="#ffffff" stroke-width="1.5" stroke-linejoin="round"/><polygon points="1134.0,604.2 1152.9,601.2 1122.5,564.1 1103.7,567.1" fill="#e0a864" stroke="#ffffff" stroke-width="1.5" stroke-linejoin="round"/><polygon points="1153.2,587.6 1122.9,550.5 1122.9,564.2 1153.2,601.2" fill="#d9a068" stroke="#ffffff" stroke-width="1.5" stroke-linejoin="round"/><polygon points="1153.2,587.6 1172.1,584.6 1141.8,547.6 1122.9,550.5" fill="#e0a864" stroke="#ffffff" stroke-width="1.5" stroke-linejoin="round"/><polygon points="1172.4,571.0 1142.1,534.0 1142.1,547.6 1172.4,584.6" fill="#d9a068" stroke="#ffffff" stroke-width="1.5" stroke-linejoin="round"/><polygon points="1172.4,571.0 1191.3,568.1 1161.0,531.0 1142.1,534.0" fill="#e0a864" stroke="#ffffff" stroke-width="1.5" stroke-linejoin="round"/><polygon points="1191.6,554.5 1161.3,517.4 1161.3,531.0 1191.6,568.1" fill="#d9a068" stroke="#ffffff" stroke-width="1.5" stroke-linejoin="round"/><polygon points="1191.6,554.5 1210.5,551.5 1180.2,514.4 1161.3,517.4" fill="#e0a864" stroke="#ffffff" stroke-width="1.5" stroke-linejoin="round"/><polygon points="1210.8,537.9 1180.5,500.8 1180.5,514.5 1210.8,551.5" fill="#d9a068" stroke="#ffffff" stroke-width="1.5" stroke-linejoin="round"/><polygon points="1210.8,537.9 1229.7,534.9 1199.4,497.9 1180.5,500.8" fill="#e0a864" stroke="#ffffff" stroke-width="1.5" stroke-linejoin="round"/><polyline points="1095.6,637.3 1095.6,664.5" fill="none" stroke="#ffffff" stroke-width="1.8" stroke-linejoin="round"/><polyline points="1114.8,620.7 1114.8,648.0" fill="none" stroke="#ffffff" stroke-width="1.8" stroke-linejoin="round"/><polyline points="1134.0,604.2 1134.0,631.4" fill="none" stroke="#ffffff" stroke-width="1.8" stroke-linejoin="round"/><polyline points="1153.2,587.6 1153.2,614.9" fill="none" stroke="#ffffff" stroke-width="1.8" stroke-linejoin="round"/><polyline points="1172.4,571.0 1172.4,598.3" fill="none" stroke="#ffffff" stroke-width="1.8" stroke-linejoin="round"/><polyline points="1191.6,554.5 1191.6,581.8" fill="none" stroke="#ffffff" stroke-width="1.8" stroke-linejoin="round"/><polyline points="1210.8,537.9 1210.8,565.3" fill="none" stroke="#ffffff" stroke-width="1.8" stroke-linejoin="round"/><polygon points="1256.1,584.6 1443.5,813.4 1444.5,1030.0 1450.8,1051.0 1248.0,803.5 1257.0,801.0" fill="#d8d8d1" stroke="#ffffff" stroke-width="1.8" stroke-linejoin="round"/><polyline points="1257.2,801.2 1446.2,1028.0" fill="none" stroke="#ffffff" stroke-width="1.5" stroke-linejoin="round"/><polyline points="1246.0,605.0 1440.0,836.0" fill="none" stroke="#ffffff" stroke-width="0" stroke-linejoin="round"/><polygon points="1290.4,591.7 1616.8,537.8 1800.1,761.2 1825.0,775.0 1450.0,830.0 1468.5,812.0" fill="#9f9dc8"/><polygon points="1616.8,537.8 1800.1,761.2 1800.1,766.9 1674.1,786.4 1673.0,606.5 1616.8,612.3" fill="#d8d8d1" stroke="#ffffff" stroke-width="1.3" stroke-linejoin="round"/><polygon points="1567.6,544.7 1616.8,537.8 1616.8,612.3 1572.2,618.0 1567.6,618.7" fill="#9f9dc8" stroke="#ffffff" stroke-width="1.3" stroke-linejoin="round"/><polyline points="1568.0,544.7 1568.0,758.9" fill="none" stroke="#ffffff" stroke-width="1.6" stroke-linejoin="round"/><polygon points="1500.0,555.0 1567.6,544.7 1567.6,758.9 1520.6,766.9 1519.5,676.4 1500.0,655.8" fill="#9c406c"/><polygon points="1500.7,557.3 1512.8,555.5 1512.8,661.4 1500.7,651.3" fill="#9c406c"/><polyline points="1500.7,555.3 1550.0,547.2" fill="none" stroke="#e06060" stroke-width="1.2" stroke-linejoin="round"/><polyline points="1500.0,553.4 1567.6,543.1" fill="none" stroke="#e06060" stroke-width="1.2" stroke-linejoin="round"/><polygon points="1519.5,766.9 1567.6,758.9 1572.2,761.2 1572.2,796.7 1519.5,805.8" fill="#e1e1d6" stroke="#ffffff" stroke-width="1.2" stroke-linejoin="round"/><polygon points="1572.2,618.0 1576.7,622.6 1576.7,797.8 1572.2,797.8" fill="#d8d8d1" stroke="#ffffff" stroke-width="1.2" stroke-linejoin="round"/><polygon points="1576.7,622.6 1673.0,607.7 1673.0,786.4 1576.7,799.0" fill="#9f9dc8" stroke="#ffffff" stroke-width="1.3" stroke-linejoin="round"/><polygon points="1572.2,618.0 1673.0,603.1 1674.1,607.7 1576.7,622.6" fill="#e1e1d6" stroke="#ffffff" stroke-width="1.3" stroke-linejoin="round"/><polygon points="1640.9,647.8 1739.4,769.9 1699.3,778.4 1639.7,705.0" fill="#62d946" stroke="#ffffff" stroke-width="1.3" stroke-linejoin="round"/><polygon points="1640.9,647.8 1674.1,643.2 1773.8,765.8 1739.4,769.9" fill="#66e244" stroke="#ffffff" stroke-width="1.3" stroke-linejoin="round"/><polygon points="1637.5,770.3 1674.1,763.5 1685.6,778.4 1646.6,785.2" fill="#66e244" stroke="#ffffff" stroke-width="1.2" stroke-linejoin="round"/><polygon points="1527.5,669.5 1534.4,678.7 1534.4,804.7 1527.5,804.7" fill="#d8d8d1" stroke="#ffffff" stroke-width="1.2" stroke-linejoin="round"/><polygon points="1535.5,678.7 1555.0,675.3 1555.0,800.1 1535.5,803.6" fill="#9f9dc8" stroke="#ffffff" stroke-width="1.2" stroke-linejoin="round"/><polygon points="1527.5,669.5 1548.1,666.1 1555.0,675.3 1534.4,678.7" fill="#e1e1d6" stroke="#ffffff" stroke-width="1.2" stroke-linejoin="round"/><polygon points="1290.4,591.7 1414.7,572.0 1414.7,684.6 1371.3,691.7" fill="#9f9dc8" stroke="#ffffff" stroke-width="1.2" stroke-linejoin="round"/><polygon points="1425.9,572.9 1433.9,571.6 1433.9,583.0 1425.9,575.5" fill="#9f9dc8"/><polygon points="1437.0,594.7 1452.1,593.7 1497.6,671.5 1437.0,680.6" fill="#d8d8d1" stroke="#ffffff" stroke-width="1.2" stroke-linejoin="round"/><polygon points="1418.8,574.5 1437.0,594.7 1435.0,681.6 1418.8,683.6" fill="#dcdc4c" stroke="#ffffff" stroke-width="1.2" stroke-linejoin="round"/><polygon points="1437.0,594.3 1452.1,593.3 1519.9,675.1 1497.6,672.1" fill="#e1e1d6" stroke="#ffffff" stroke-width="1.2" stroke-linejoin="round"/><polygon points="1379.4,705.5 1518.8,678.6 1519.9,806.9 1470.3,813.0" fill="#9f9dc8"/><polygon points="1500.0,678.7 1518.3,676.4 1518.3,807.0 1500.0,809.3" fill="#9f9dc8"/><polyline points="1518.3,676.4 1518.3,807.0" fill="none" stroke="#ffffff" stroke-width="1.2" stroke-linejoin="round"/><polygon points="1351.1,697.8 1371.3,691.7 1497.6,671.5 1519.9,675.1 1519.9,678.2 1379.4,705.5 1352.1,701.4" fill="#e1e1d6" stroke="#ffffff" stroke-width="1.2" stroke-linejoin="round"/><polygon points="1256.1,584.6 1631.4,522.6 1826.3,759.1 1800.1,761.2 1616.8,537.8 1290.4,591.7 1468.5,812.0 1443.5,813.4" fill="#e1e1d6" stroke="#ffffff" stroke-width="1.8" stroke-linejoin="round"/><polygon points="1492.5,542.0 1557.5,530.5 1558.4,543.3 1567.6,544.7 1500.6,557.3 1491.6,546.2" fill="#212830"/><polyline points="1491.6,546.2 1500.6,557.3" fill="none" stroke="#ffffff" stroke-width="1.5" stroke-linejoin="round"/><polyline points="1558.4,534.4 1558.4,543.3 1567.6,544.7" fill="none" stroke="#ffffff" stroke-width="1.5" stroke-linejoin="round"/><polyline points="1500.6,556.5 1567.6,544.0" fill="none" stroke="#e06060" stroke-width="1.3" stroke-linejoin="round"/><polyline points="1280.3,583.0 1290.4,591.7" fill="none" stroke="#ffffff" stroke-width="1" stroke-linejoin="round"/><polyline points="1612.0,527.6 1619.1,536.5 1637.9,533.0" fill="none" stroke="#ffffff" stroke-width="1.1" stroke-linejoin="round"/><polyline points="1637.5,533.2 1818.4,752.0" fill="none" stroke="#ffffff" stroke-width="1" stroke-linejoin="round"/><polyline points="1705.0,639.7 1726.8,636.3" fill="none" stroke="#ffffff" stroke-width="1" stroke-linejoin="round"/><polyline points="1707.3,648.9 1729.1,645.5" fill="none" stroke="#ffffff" stroke-width="1" stroke-linejoin="round"/><polyline points="1436.0,553.2 1444.1,564.4" fill="none" stroke="#ffffff" stroke-width="1" stroke-linejoin="round"/><polyline points="1456.2,549.2 1464.3,560.3" fill="none" stroke="#ffffff" stroke-width="1" stroke-linejoin="round"/><polyline points="1262.0,590.0 1444.0,811.0" fill="none" stroke="#ffffff" stroke-width="1" stroke-linejoin="round"/><polygon points="1443.5,813.4 1450.7,821.0 1450.8,1051.0 1444.2,1043.0" fill="#d8d8d1" stroke="#ffffff" stroke-width="1.3" stroke-linejoin="round"/><polygon points="1450.7,821.0 1825.3,760.0 1826.8,989.3 1450.8,1051.0" fill="#9f9dc8" stroke="#ffffff" stroke-width="1.8" stroke-linejoin="round"/><polygon points="1474.8,818.4 1627.2,794.3 1627.2,1006.3 1474.8,1029.2" fill="#376f88" stroke="#ffffff" stroke-width="1.3" stroke-linejoin="round"/><polygon points="1478.3,821.9 1623.7,797.8 1623.7,1002.8 1478.3,1025.7" fill="#a0787a" stroke="#ffffff" stroke-width="1.6" stroke-linejoin="round"/><polygon points="1647.7,788.6 1801.3,764.5 1801.3,977.7 1647.7,1000.6" fill="#376f88" stroke="#ffffff" stroke-width="1.3" stroke-linejoin="round"/><polygon points="1651.2,792.1 1797.8,768.0 1797.8,974.2 1651.2,997.1" fill="#a0787a" stroke="#ffffff" stroke-width="1.6" stroke-linejoin="round"/><polyline points="1450.8,1034.0 1825.3,974.5" fill="none" stroke="#ffffff" stroke-width="1.6" stroke-linejoin="round"/><polyline points="1474.0,815.0 1620.0,791.0" fill="none" stroke="#4a62c8" stroke-width="1.2" stroke-linejoin="round"/><polyline points="1647.0,785.0 1797.0,761.0" fill="none" stroke="#4a62c8" stroke-width="1.2" stroke-linejoin="round"/><polygon points="1620.3,782.9 1640.9,779.5 1646.6,788.6 1629.4,790.9" fill="#e1e1d6" stroke="#ffffff" stroke-width="1.2" stroke-linejoin="round"/><polygon points="1795.5,754.3 1817.3,750.9 1826.5,758.9 1802.4,763.5" fill="#e1e1d6" stroke="#ffffff" stroke-width="1.2" stroke-linejoin="round"/><polygon points="1443.7,812.9 1463.7,809.4 1468.5,817.2 1450.2,821.0" fill="#e1e1d6" stroke="#ffffff" stroke-width="1.2" stroke-linejoin="round"/><polyline points="1446.5,821.0 1446.5,1036.0" fill="none" stroke="#ffffff" stroke-width="1.2" stroke-linejoin="round"/><polyline points="1629.0,791.0 1629.0,1005.0" fill="none" stroke="#ffffff" stroke-width="1.2" stroke-linejoin="round"/><polyline points="1646.0,789.0 1646.0,1002.0" fill="none" stroke="#ffffff" stroke-width="1.2" stroke-linejoin="round"/><polyline points="1802.0,764.0 1802.0,976.0" fill="none" stroke="#ffffff" stroke-width="1.2" stroke-linejoin="round"/><line x1="1881.4" y1="799.8" x2="1881.4" y2="927.2" stroke="#66ee55" stroke-width="1.3"/><line x1="1836.6" y1="891.8" x2="1972" y2="871.2" stroke="#ee6666" stroke-width="1.5"/><line x1="1866" y1="864.9" x2="1914.8" y2="924.7" stroke="#6a6ae8" stroke-width="1.3"/><rect x="1876.9" y="879.8" width="9" height="9" fill="#212830" stroke="#ffffff" stroke-width="1.5"/><defs><linearGradient id="gy" x1="0" x2="1"><stop offset="0" stop-color="#2f7030"/><stop offset="1" stop-color="#6aaa6a"/></linearGradient><linearGradient id="gx" x1="0" y1="0" x2="0" y2="1"><stop offset="0" stop-color="#a04848"/><stop offset="1" stop-color="#c06a6a"/></linearGradient></defs><rect x="1446" y="972" width="9" height="65" fill="url(#gy)"/><polygon points="1446,972 1450.5,968 1455,972" fill="#7acc7a"/><line x1="1455" y1="1035" x2="1520" y2="1024" stroke="url(#gx)" stroke-width="6.5" stroke-linecap="round"/><line x1="1451" y1="1034" x2="1475" y2="1066" stroke="#3a70c2" stroke-width="7.5" stroke-linecap="round"/><polyline points="1446.7,949 1456,958 1464.6,949 M1456,958" fill="none" stroke="#3cc03c" stroke-width="1.2"/><line x1="1456" y1="958" x2="1456" y2="966" stroke="#3cc03c" stroke-width="1.2"/><line x1="1514" y1="1000" x2="1532" y2="1018" stroke="#ee3333" stroke-width="1.2"/><line x1="1532" y1="1000" x2="1514" y2="1018" stroke="#ee3333" stroke-width="1.2"/><polyline points="1472,1044.6 1489.8,1044.6 1472.2,1062.2 1489.8,1062.2" fill="none" stroke="#2277ff" stroke-width="1.2"/></svg>
<div class="a" style="left:579px;top:1253px;width:1439px;height:187px;background:#272d38;border-radius:5px 0 0 5px;"></div>
<div class="a" style="left:616px;top:1253px;width:1402px;height:155px;background:#9b9b9b;"></div>
<div class="a" style="left:616px;top:1407px;width:1402px;height:2px;background:#2a2f38;"></div>
<div class="a" style="left:616px;top:1409px;width:1402px;height:31px;background:#c2c2c2;"></div>
<div class="t" style="left:620.5px;top:1271.7px;font-size:17.3px;color:#000000;font-family:'Liberation Mono',monospace;transform:scale(1.048,1.150);transform-origin:0 13.3px;">Command:</div>
<div class="t" style="left:620.5px;top:1294.7px;font-size:17.3px;color:#000000;font-family:'Liberation Mono',monospace;transform:scale(1.048,1.150);transform-origin:0 13.3px;">Command:</div>
<div class="t" style="left:620.5px;top:1317.7px;font-size:17.3px;color:#000000;font-family:'Liberation Mono',monospace;transform:scale(1.048,1.150);transform-origin:0 13.3px;">Command:</div>
<div class="t" style="left:620.5px;top:1340.7px;font-size:17.3px;color:#000000;font-family:'Liberation Mono',monospace;transform:scale(1.048,1.150);transform-origin:0 13.3px;">Command:</div>
<div class="t" style="left:620.5px;top:1363.7px;font-size:17.3px;color:#000000;font-family:'Liberation Mono',monospace;transform:scale(1.048,1.150);transform-origin:0 13.3px;">Command:</div>
<div class="t" style="left:620.5px;top:1386.7px;font-size:17.3px;color:#000000;font-family:'Liberation Mono',monospace;transform:scale(1.048,1.150);transform-origin:0 13.3px;">Command:</div>
<div class="t" style="left:672.0px;top:1416.5px;font-size:17.3px;color:#6a6a6a;font-family:'Liberation Mono',monospace;font-style:italic;transform:scale(1.060,1.100);transform-origin:0 13.3px;">Type a command</div>
<div class="a" style="left:1576px;top:1492px;width:72px;height:36px;background:#3b4453;"></div>
<div class="a" style="left:1654px;top:1492px;width:96px;height:36px;background:#3b4453;"></div>
<div class="a" style="left:1756px;top:1492px;width:36px;height:36px;background:#3b4453;"></div>
<div class="a" style="left:1794px;top:1492px;width:156px;height:36px;background:#3b4453;"></div>
<div class="a" style="left:1953px;top:1492px;width:95px;height:36px;background:#3b4453;"></div>
<div class="a" style="left:2050px;top:1492px;width:35px;height:36px;background:#3b4453;"></div>
<div class="a" style="left:2093px;top:1492px;width:157px;height:36px;background:#3b4453;"></div>
<div class="a" style="left:2256px;top:1492px;width:60px;height:36px;background:#3b4453;"></div>
<div class="a" style="left:2318px;top:1492px;width:36px;height:36px;background:#3b4453;"></div>
<div class="a" style="left:2360px;top:1492px;width:36px;height:36px;background:#3b4453;"></div>
<div class="a" style="left:2400px;top:1492px;width:84px;height:36px;background:#3b4453;"></div>
<div class="a" style="left:2488px;top:1492px;width:72px;height:36px;background:#3b4453;"></div>
<div class="a" style="left:1831px;top:1493px;width:34px;height:34px;background:#5b8bc0;"></div>
<div class="a" style="left:1953px;top:1493px;width:34px;height:34px;background:#5b8bc0;"></div>
<div class="a" style="left:1989px;top:1493px;width:34px;height:34px;background:#5b8bc0;"></div>
<div class="a" style="left:2050px;top:1493px;width:35px;height:34px;background:#5b8bc0;"></div>
<div class="a" style="left:2093px;top:1493px;width:34px;height:34px;background:#5b8bc0;"></div>
<div class="t" style="left:1582.0px;top:1501.7px;font-size:18px;color:#f0f0f0;font-family:'Liberation Sans',sans-serif;transform:scale(0.953,1.000);transform-origin:0 15.3px;">MODEL</div>
<div class="t" style="left:2208.4px;top:1501.7px;font-size:18px;color:#f0f0f0;font-family:'Liberation Sans',sans-serif;transform:scale(0.679,1.000);transform-origin:0 15.3px;">1:1</div>
<svg style="left:0;top:0" width="2560" height="220"><polygon points="0,3.5 4.5,2.3 4.5,25.6 0,27" fill="#f0508a"/><rect x="4.5" y="2.3" width="23.5" height="23.3" fill="#e0195a"/><rect x="28" y="5" width="30" height="17.7" fill="#7a0d2a"/><path d="M8.5,21.5 L14.5,6.5 H18 L24,21.5 H20.3 L19,18 H13.5 L12.2,21.5 Z M14.5,15 H18 L16.25,10 Z" fill="#ffffff" fill-rule="evenodd"/><text x="32" y="18.8" font-family="Liberation Sans" font-weight="bold" font-size="11" fill="#ffffff" textLength="22" lengthAdjust="spacingAndGlyphs">CAD</text><path d="M73,7 H91 L97,13 V25 H73 Z" fill="#d8d8d8"/><path d="M91,7 V13 H97" fill="#f4f4f4"/><path d="M110,8 H117 L119,10 H128 V14 H114 L110,25 Z" fill="#c8c8c8"/><path d="M114,14.5 H133 L128.5,25.5 H109.5 Z" fill="#d8d8d8"/><path d="M145,4 H166 L169,7 V28.4 H145 Z" fill="#b8b8b8"/><rect x="149.5" y="4" width="14" height="7.5" fill="#f0f0f0"/><rect x="148.5" y="18.5" width="17" height="9.9" fill="#f8f8f8"/><rect x="150" y="21" width="2.5" height="4.5" fill="#444"/><path d="M181,4 H202 L205,7 V20 L198,28 H181 Z" fill="#b8b8b8"/><rect x="185.5" y="4" width="14" height="7" fill="#f0f0f0"/><rect x="184.5" y="18.5" width="12" height="8" fill="#f8f8f8"/><rect x="186" y="21" width="2.5" height="4" fill="#444"/><polygon points="193,27.5 194,23.5 202,15.5 205,18.5 197,26.5" fill="#f5c86a"/><circle cx="204" cy="16.5" r="2.3" fill="#e65050"/><rect x="218" y="4" width="13.5" height="23" rx="1.5" fill="#5a5f68" stroke="#c8c8c8" stroke-width="1.2"/><path d="M226,19 H231 L233,21 H240 V27 H226 Z" fill="#f5c86a"/><path d="M228,22 H241 L239,27.5 H226 Z" fill="#f9d88a"/><rect x="259" y="4" width="15" height="23" rx="1.5" fill="#5a5f68" stroke="#c8c8c8" stroke-width="1.2"/><path d="M256,13 H265" stroke="#5ab4ec" stroke-width="2.5"/><polygon points="264,8.5 270,13 264,17.5" fill="#5ab4ec"/><rect x="293" y="4" width="15" height="6" fill="#f0f0f0"/><rect x="288.5" y="9.5" width="24.5" height="11" rx="1" fill="#d8d8d8"/><rect x="293.5" y="17" width="14.5" height="10.5" fill="#8ccfff" stroke="#f0f0f0" stroke-width="1.2"/><path d="M330,15 Q341,9 348,21.5" stroke="#d0d0d0" stroke-width="3.5" fill="none"/><polygon points="325.5,14.5 333,9 333,21" fill="#d0d0d0"/><polygon points="359.1,14.0 366.3,14.0 362.7,17.7" fill="#d8d8d8"/><path d="M397,15 Q386,9 379,21.5" stroke="#6a7280" stroke-width="3.5" fill="none"/><polygon points="402.6,14.5 395,9 395,21" fill="#6a7280"/><polygon points="412.8,14.0 420.2,14.0 416.5,17.7" fill="#d8d8d8"/><rect x="432.7" y="9" width="12.3" height="1.6" fill="#d8d8d8"/><polygon points="432.7,13 445,13 438.85,20" fill="#d8d8d8"/><polygon points="457.5,15 481,5 476,25.4 469,20.5 466,25 466,18.5" fill="#5ab4ec"/><polygon points="466,18.5 481,5 469,20.5" fill="#3a8ac8"/><polygon points="1700.4,10.5 1707.5,16 1700.4,21.5" fill="#d8d8d8"/><circle cx="2000.5" cy="13.5" r="7.5" stroke="#e8e8e8" stroke-width="1.8" fill="none"/><path d="M2006,19 L2013,26" stroke="#e0a050" stroke-width="2.5"/><circle cx="2038.5" cy="9.5" r="6.5" fill="#5ab4ec"/><path d="M2026.5,27 Q2027,17.5 2038.5,17.5 Q2050,17.5 2050.5,27 Z" fill="#5ab4ec"/><polygon points="2187.0,12.6 2193.0,12.6 2190.0,16.8" fill="#d8d8d8"/><path d="M2214,8 H2217.5 L2220,21 H2231 L2233,12 H2218.5" stroke="#a8a8a8" stroke-width="1.8" fill="none"/><circle cx="2221" cy="25" r="1.6" fill="#a8a8a8"/><circle cx="2230" cy="25" r="1.6" fill="#a8a8a8"/><path d="M2258.5,8 L2250,24.5 H2267 Z" stroke="#d8d8d8" stroke-width="2.3" fill="none" stroke-linejoin="round"/><circle cx="2258.5" cy="8" r="2.5" fill="#d8d8d8"/><circle cx="2250" cy="24.5" r="2.8" fill="#d8d8d8"/><circle cx="2267" cy="24.5" r="2.8" fill="#d8d8d8"/><polygon points="2278.0,12.6 2285.4,12.6 2281.7,16.8" fill="#d8d8d8"/><rect x="2301" y="1" width="1.8" height="26.5" fill="#3b4453"/><circle cx="2327" cy="16" r="12" fill="#d8d8d8"/><text x="2322" y="22.5" font-family="Liberation Sans" font-weight="bold" font-size="17" fill="#6a6f78">?</text><polygon points="2349.8,12.6 2356.2,12.6 2353.0,16.8" fill="#d8d8d8"/><rect x="2463.3" y="20" width="12.7" height="4.2" fill="#e8e8e8"/><rect x="2499.8" y="12" width="12" height="10.5" fill="none" stroke="#e8e8e8" stroke-width="2.2"/><path d="M2503.5,11 V8 H2518 V19 H2513" fill="none" stroke="#e8e8e8" stroke-width="2.2"/><path d="M2538,9 L2551.5,22.5 M2551.5,9 L2538,22.5" stroke="#e8e8e8" stroke-width="2.8"/><rect x="1148" y="51" width="23" height="11" fill="#f0f0f0"/><polygon points="1155.5,59.5 1163.5,59.5 1159.5,54.5" fill="#3b4453"/><polygon points="1176.0,55.0 1183.0,55.0 1179.5,59.0" fill="#d8d8d8"/><path d="M245.5,236 L256.2,246.5 M256.2,236 L245.5,246.5" stroke="#b8bcc4" stroke-width="2.5"/><path d="M288.8,241 H307 M297.9,232 V250" stroke="#e8e8e8" stroke-width="2.8"/></svg>
<svg style="left:0;top:0" width="2560" height="1000"><rect x="2474" y="284" width="16" height="7" fill="#e8e8e8" stroke="#111" stroke-width="1"/><rect x="2506" y="280.5" width="10.5" height="10.5" fill="none" stroke="#e8e8e8" stroke-width="2.6"/><path d="M2509.5,279 V277.5 H2519.5 V287.5 H2518" fill="none" stroke="#e8e8e8" stroke-width="2.2"/><path d="M2535,278.5 L2548.5,289.5 M2548.5,278.5 L2535,289.5" stroke="#e8e8e8" stroke-width="3.2"/><path d="M2342.3999999999996,468.5 A96.8,47 0 1 0 2536.0,468.5 A96.8,47 0 1 0 2342.3999999999996,468.5 Z M2364.2,468.5 A75,32 0 1 1 2514.2,468.5 A75,32 0 1 1 2364.2,468.5 Z" fill="#434a55" fill-rule="evenodd"/><defs><radialGradient id="glow"><stop offset="0.5" stop-color="#5a6270" stop-opacity="0.5"/><stop offset="1" stop-color="#212830" stop-opacity="0"/></radialGradient></defs><ellipse cx="2440" cy="425" rx="70" ry="70" fill="url(#glow)"/><polygon points="2392.8,379.1 2460.4,371.1 2487.9,397.5 2414.5,406.6" fill="#b2b5ba"/><polygon points="2392.8,379.1 2414.5,406.6 2416.8,476.5 2396.2,450.2" fill="#9a9ea5"/><polygon points="2414.5,406.6 2487.9,397.5 2485.6,462.7 2416.8,476.5" fill="#a9acb1"/><path d="M2414.5,406.6 L2487.9,397.5 M2414.5,406.6 L2416.8,476.5 M2392.8,379.1 L2414.5,406.6" stroke="#8a8e94" stroke-width="0.8" stroke-dasharray="3,2"/><rect x="2412" y="404" width="16" height="14" fill="#9da2b0"/><text x="2452" y="444" text-anchor="middle" font-family="Liberation Sans" font-weight="bold" font-size="19" fill="#5c6068" transform="rotate(-8 2452 437)">TOP</text><text x="2437" y="383" text-anchor="middle" font-family="Liberation Sans" font-weight="bold" font-size="12" fill="#5c6068" transform="rotate(172 2437 387)">BACK</text><text x="2405" y="434" text-anchor="middle" font-family="Liberation Sans" font-weight="bold" font-size="11" fill="#5c6068" transform="rotate(95 2405 429)">LEFT</text><g transform="translate(2349,474) rotate(-17) scale(1.25,0.8)"><text x="0" y="8" text-anchor="middle" font-family="Liberation Sans" font-weight="bold" font-size="23" fill="#a6aab0">W</text></g><g transform="translate(2519,442) rotate(-22) scale(1.2,0.75)"><text x="0" y="8" text-anchor="middle" font-family="Liberation Sans" font-weight="bold" font-size="23" fill="#a6aab0">E</text></g><g transform="translate(2475,507) rotate(12) scale(1.25,0.8)"><text x="0" y="8" text-anchor="middle" font-family="Liberation Sans" font-weight="bold" font-size="23" fill="#a6aab0">S</text></g><rect x="2390" y="551.4" width="99" height="25.4" rx="5" fill="#8c91a0" stroke="#a8acb8" stroke-width="1"/><text x="2396" y="569.5" font-family="Liberation Sans" font-size="15" fill="#5e6272" textLength="66" lengthAdjust="spacingAndGlyphs">Unnamed</text><polygon points="2469,563 2482,563 2475.5,569" fill="none" stroke="#6a6e7e" stroke-width="1"/><rect x="2513" y="610" width="46" height="310" rx="5" fill="#5a5f66" stroke="#6a6f76" stroke-width="1"/><circle cx="2550" cy="617" r="4.5" fill="none" stroke="#474b52" stroke-width="1.3"/><path d="M2536,636 a16,16 0 1 0 14,4 z" fill="none" stroke="#474b52" stroke-width="1.5"/><circle cx="2535" cy="651" r="8.5" fill="none" stroke="#474b52" stroke-width="1.5"/><polygon points="2533.0,678.0 2539.0,678.0 2536.0,681.5" fill="#474b52"/><path d="M2520,714 Q2526,712 2530,720 L2529,702 Q2530,698 2533,700 L2535,713 L2535,698 Q2537,695 2539,698 L2540,712 L2541,700 Q2543,697 2545,700 L2545,718 Q2544,730 2536,732 H2530 Z" fill="none" stroke="#474b52" stroke-width="1.4"/><path d="M2518,740 L2537,759 M2537,740 L2518,759 M2518,740 v5 M2518,740 h5 M2537,740 h-5 M2537,740 v5 M2518,759 v-5 M2518,759 h5" stroke="#474b52" stroke-width="1.5" fill="none"/><circle cx="2543" cy="761" r="7" fill="none" stroke="#474b52" stroke-width="1.6"/><path d="M2548,766 L2553,772" stroke="#474b52" stroke-width="2.5"/><polygon points="2533.0,784.0 2539.0,784.0 2536.0,787.5" fill="#474b52"/><ellipse cx="2535" cy="817" rx="16" ry="6" fill="none" stroke="#474b52" stroke-width="1.4"/><path d="M2532,830 V803 H2528 L2535,796 L2542,803 H2538 V830 Z" fill="#5a5f66" stroke="#474b52" stroke-width="1.3"/><polygon points="2533.0,841.0 2539.0,841.0 2536.0,844.5" fill="#474b52"/><rect x="2518" y="861" width="8" height="8" fill="none" stroke="#474b52" stroke-width="1.2"/><rect x="2530" y="861" width="8" height="8" fill="none" stroke="#474b52" stroke-width="1.2"/><rect x="2542" y="861" width="8" height="8" fill="none" stroke="#474b52" stroke-width="1.2"/><rect x="2518" y="874" width="24" height="16" fill="none" stroke="#474b52" stroke-width="1.3"/><polygon points="2526,877 2526,887 2534,882" fill="#474b52"/><circle cx="2550" cy="912" r="4.5" fill="none" stroke="#474b52" stroke-width="1.3"/></svg>
<svg style="left:0;top:0" width="2560" height="1539"><rect x="585.0" y="1259.7" width="2.2" height="1.8" fill="#c8c8c8"/><rect x="589.6" y="1259.7" width="2.2" height="1.8" fill="#c8c8c8"/><rect x="594.2" y="1259.7" width="2.2" height="1.8" fill="#c8c8c8"/><rect x="598.8" y="1259.7" width="2.2" height="1.8" fill="#c8c8c8"/><rect x="603.4" y="1259.7" width="2.2" height="1.8" fill="#c8c8c8"/><rect x="608.0" y="1259.7" width="2.2" height="1.8" fill="#c8c8c8"/><path d="M590.5,1281 L603.5,1293 M603.5,1281 L590.5,1293" stroke="#c8c8c8" stroke-width="2.9"/><path d="M587,1333 L599,1320" stroke="#c8c8c8" stroke-width="3" stroke-linecap="round"/><path d="M597,1322 a6,6 0 0 1 8,-9 l-3,4 l2,2 l4,-3 a6,6 0 0 1 -9,8" fill="#c8c8c8"/><rect x="623.5" y="1416.5" width="23.5" height="17" fill="none" stroke="#404040" stroke-width="1.2"/><rect x="623.5" y="1416.5" width="23.5" height="3.5" fill="#404040"/><path d="M626,1424 L629,1426.5 L626,1429 M630,1430 H635" stroke="#404040" stroke-width="1" fill="none"/><polygon points="651.0,1421.8 662.0,1421.8 656.5,1427.3" fill="#404040"/><polygon points="2001.5,1427 2013,1427 2007.25,1422" fill="#404040"/></svg>
<svg style="left:0;top:0" width="2560" height="1539"><path d="M1664,1498 V1521 M1671,1498 V1521 M1678,1498 V1521 M1660,1502 H1683 M1660,1509.5 H1683 M1660,1517 H1683" stroke="#e8e8e8" stroke-width="1.1"/><rect x="1699" y="1501" width="3" height="3" fill="#e8e8e8"/><rect x="1699" y="1508" width="3" height="3" fill="#e8e8e8"/><rect x="1699" y="1515" width="3" height="3" fill="#e8e8e8"/><rect x="1706" y="1501" width="3" height="3" fill="#e8e8e8"/><rect x="1706" y="1508" width="3" height="3" fill="#e8e8e8"/><rect x="1706" y="1515" width="3" height="3" fill="#e8e8e8"/><rect x="1713" y="1501" width="3" height="3" fill="#e8e8e8"/><rect x="1713" y="1508" width="3" height="3" fill="#e8e8e8"/><rect x="1713" y="1515" width="3" height="3" fill="#e8e8e8"/><polygon points="1732.2,1507.0 1743.8,1507.0 1738.0,1512.5" fill="#d8d8d8"/><path d="M1762,1503.5 H1772 M1767,1498.5 V1508.5" stroke="#e8e8e8" stroke-width="1.3"/><rect x="1771" y="1513" width="15" height="6" fill="#e8e8e8"/><rect x="1772.5" y="1514.5" width="3" height="3" fill="#3b4453"/><path d="M1800.5,1498 V1521.5 H1824 M1800.5,1514 H1807 V1521.5" stroke="#e8e8e8" stroke-width="1.2" fill="none"/><circle cx="1845" cy="1511" r="8.3" fill="none" stroke="#e8e8e8" stroke-width="1.2"/><path d="M1845,1511 L1857,1500 M1845,1511 H1860" stroke="#e8e8e8" stroke-width="1.2"/><polygon points="1872.2,1507.0 1883.8,1507.0 1878.0,1512.5" fill="#d8d8d8"/><path d="M1899,1498 L1917,1518" stroke="#e05050" stroke-width="1.2"/><path d="M1908,1498 V1521" stroke="#50d050" stroke-width="1.2"/><rect x="1905.5" y="1506" width="5" height="5" fill="#3b4453" stroke="#e8e8e8" stroke-width="1"/><polygon points="1931.8,1507.0 1943.2,1507.0 1937.5,1512.5" fill="#d8d8d8"/><path d="M1958,1520 L1976,1502 M1958,1520 H1982" stroke="#e8e8e8" stroke-width="1.2"/><rect x="1966" y="1508.5" width="4" height="4" fill="#e8e8e8"/><rect x="1993.5" y="1499.5" width="6" height="6" fill="none" stroke="#e8e8e8" stroke-width="1.1"/><path d="M1998,1502.5 H2017 V1522 H1998 V1505" fill="none" stroke="#e8e8e8" stroke-width="1.1"/><polygon points="2030.2,1507.0 2041.8,1507.0 2036.0,1512.5" fill="#d8d8d8"/><path d="M2053,1500 H2058 M2055.5,1497.5 V1502.5" stroke="#e8e8e8" stroke-width="1.1"/><path d="M2056,1504 H2070 V1508" stroke="#e8e8e8" stroke-width="1" fill="none"/><rect x="2064" y="1508" width="16" height="15" fill="#e8e8e8"/><polygon points="2110,1498 2116,1516 2121,1521 2110,1517 2099,1521 2104,1516" fill="#e8e8e8"/><circle cx="2121" cy="1503" r="4" fill="none" stroke="#e8e8e8" stroke-width="1.1"/><polygon points="2145,1498 2151,1516 2156,1521 2145,1517 2134,1521 2139,1516" fill="#e8e8e8"/><polygon points="2154,1498 2149,1505 2152,1505 2150,1510 2156,1503 2153,1503 2156,1498" fill="#e8e8e8"/><polygon points="2182,1498 2188,1516 2193,1521 2182,1517 2171,1521 2176,1516" fill="#e8e8e8"/><polygon points="2232.2,1507.0 2243.8,1507.0 2238.0,1512.5" fill="#d8d8d8"/><polygon points="2285.7,1507.5 2285.7,1512.5 2282.7,1512.3 2281.8,1514.6 2284.1,1516.5 2280.5,1520.1 2278.6,1517.8 2276.3,1518.7 2276.5,1521.7 2271.5,1521.7 2271.7,1518.7 2269.4,1517.8 2267.5,1520.1 2263.9,1516.5 2266.2,1514.6 2265.3,1512.3 2262.3,1512.5 2262.3,1507.5 2265.3,1507.7 2266.2,1505.4 2263.9,1503.5 2267.5,1499.9 2269.4,1502.2 2271.7,1501.3 2271.5,1498.3 2276.5,1498.3 2276.3,1501.3 2278.6,1502.2 2280.5,1499.9 2284.1,1503.5 2281.8,1505.4 2282.7,1507.7" fill="#e8e8e8"/><circle cx="2274" cy="1510" r="4.2" fill="#3b4453"/><polygon points="2298.2,1507.0 2309.8,1507.0 2304.0,1512.5" fill="#d8d8d8"/><path d="M2324,1510 H2347 M2335.5,1498.5 V1521.5" stroke="#e8e8e8" stroke-width="2.4"/><rect x="2366.5" y="1498.5" width="8" height="8" fill="none" stroke="#e8e8e8" stroke-width="1.1"/><circle cx="2384.5" cy="1507" r="5" fill="none" stroke="#e8e8e8" stroke-width="1.1"/><polygon points="2373,1513 2377.5,1521 2368.5,1521" fill="none" stroke="#e8e8e8" stroke-width="1.1"/><polygon points="2404,1492 2427,1492 2434,1499 2434,1517 2404,1517" fill="#3a70b8"/><rect x="2404" y="1513" width="14" height="10" fill="#f0b030"/><path d="M2411,1493 V1509 M2404,1500 H2420" stroke="#ffffff" stroke-width="1.2"/><circle cx="2411" cy="1500" r="2.5" fill="none" stroke="#ffffff" stroke-width="1"/><path d="M2417,1519 L2423,1525 L2436,1512" stroke="#50c050" stroke-width="3" fill="none"/><path d="M2456,1505 A9,9 0 1 1 2472,1512" fill="none" stroke="#e8e8e8" stroke-width="1.2"/><rect x="2450" y="1507" width="10" height="14" fill="none" stroke="#e8e8e8" stroke-width="1.1"/><rect x="2451" y="1515" width="8" height="5" fill="#f0b030"/><circle cx="2469.5" cy="1518" r="4.5" fill="#3a9ae8"/><rect x="2494.5" y="1501" width="24" height="17" fill="none" stroke="#e8e8e8" stroke-width="1.2"/><path d="M2505,1511 L2499,1516 M2499,1512 V1516 H2503 M2508,1508 L2514,1503 M2510,1503 H2514 V1507" stroke="#e8e8e8" stroke-width="1.2" fill="none"/><path d="M2530,1500 H2554 M2530,1510 H2554 M2530,1520 H2554" stroke="#e8e8e8" stroke-width="2.4"/></svg>
</body></html>
